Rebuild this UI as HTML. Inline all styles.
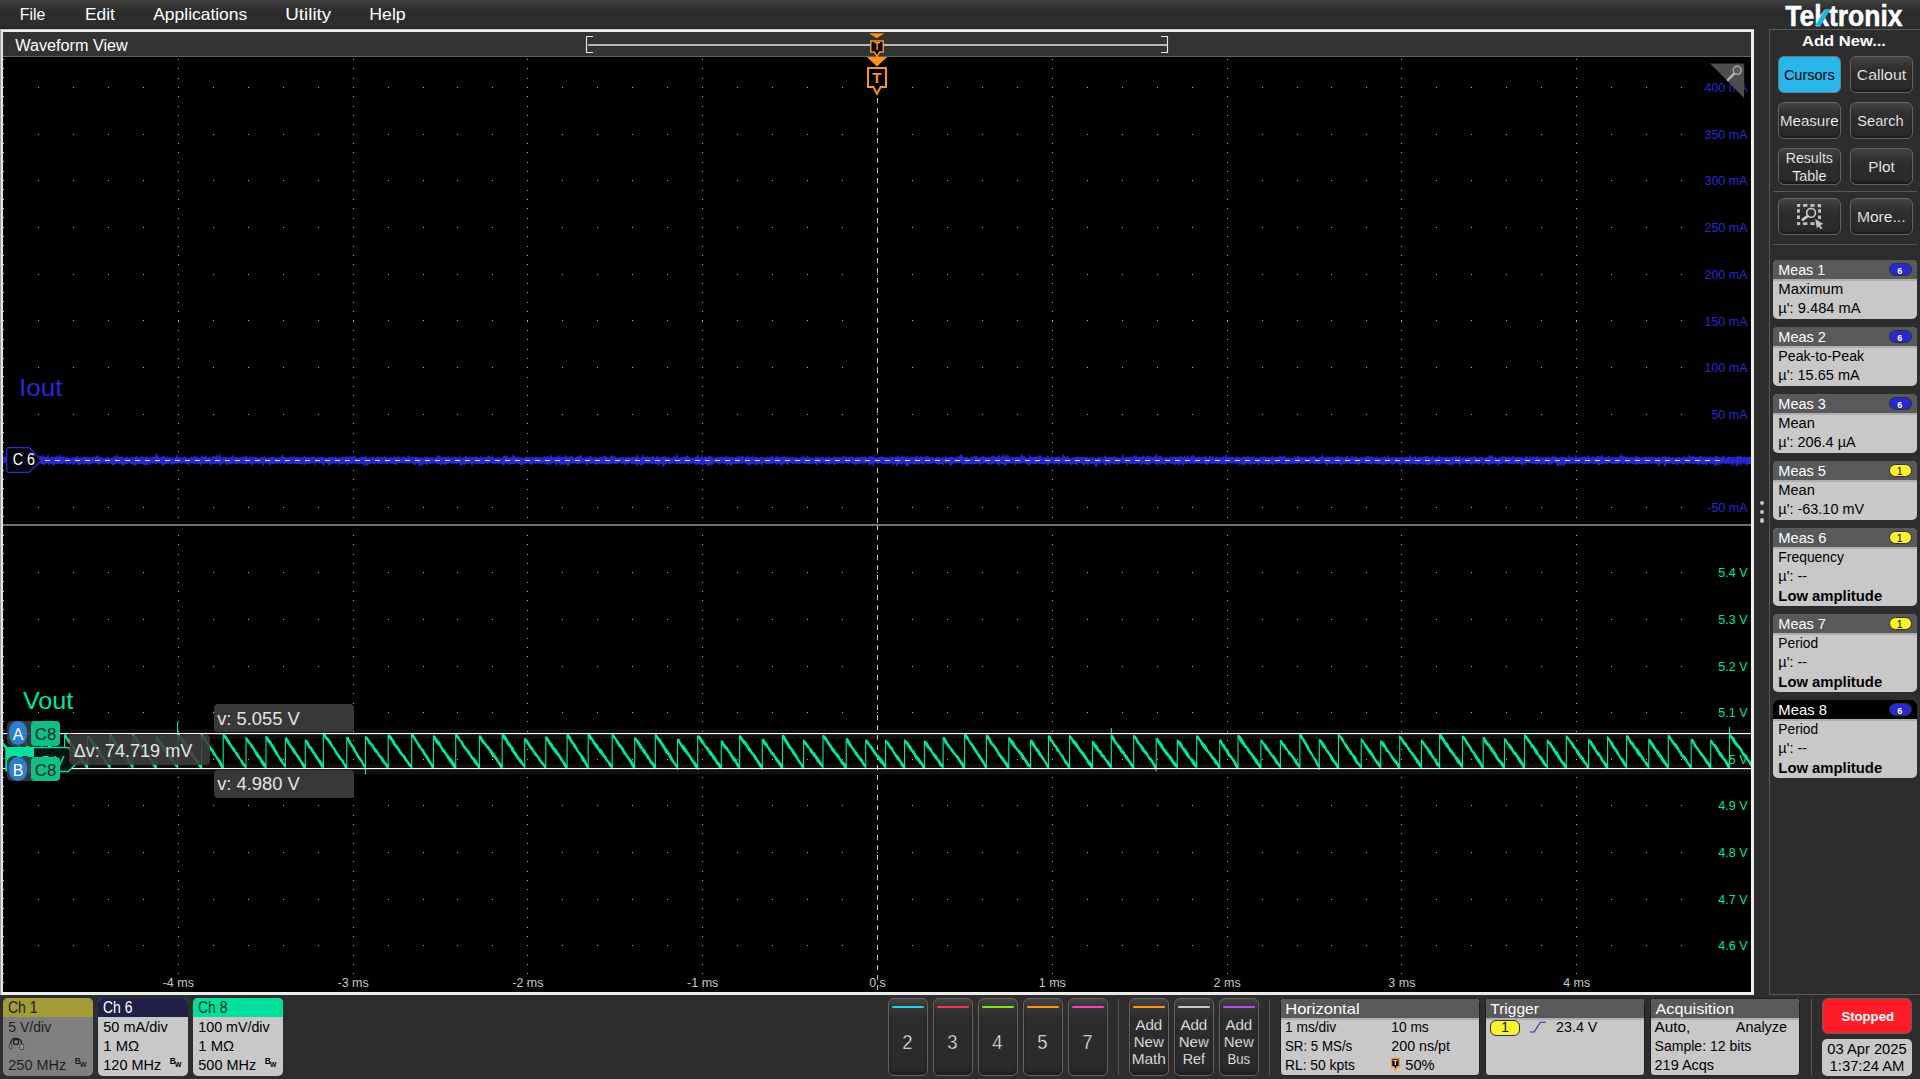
<!DOCTYPE html>
<html><head><meta charset="utf-8"><title>Waveform View</title>
<style>
html,body{margin:0;padding:0}
body{width:1920px;height:1079px;overflow:hidden;background:#2d2d2d;font-family:"Liberation Sans", sans-serif;position:relative}
div,svg{position:absolute;box-sizing:border-box}
text{font-family:"Liberation Sans", sans-serif;white-space:pre}
</style></head>
<body>
<div style="left:0px;top:0px;width:1920px;height:29px;background:linear-gradient(#424242 0,#3a3a3a 3px,#2d2d2d 11px)"></div>
<div style="left:0px;top:27px;width:1755px;height:2px;background:linear-gradient(#2a2a2a,#1b1b1b)"></div>
<svg width="1920" height="1079" style="left:0;top:0"><text x="19.76" y="20" font-size="16.5" fill="#fff" textLength="25.48" lengthAdjust="spacingAndGlyphs">File</text><text x="84.96" y="20" font-size="16.5" fill="#fff" textLength="29.88" lengthAdjust="spacingAndGlyphs">Edit</text><text x="153.26" y="20" font-size="16.5" fill="#fff" textLength="93.98" lengthAdjust="spacingAndGlyphs">Applications</text><text x="285.26" y="20" font-size="16.5" fill="#fff" textLength="45.98" lengthAdjust="spacingAndGlyphs">Utility</text><text x="369.26" y="20" font-size="16.5" fill="#fff" textLength="36.48" lengthAdjust="spacingAndGlyphs">Help</text></svg>
<div style="left:0px;top:29px;width:1754px;height:966px;background:#000;border:3px solid #ececec;border-left-color:#e4e4e4"></div>
<div style="left:0px;top:29px;width:1px;height:966px;background:#a4a4a4"></div>
<div style="left:0px;top:29px;width:1754px;height:1px;background:#cfcfcf"></div>
<div style="left:3px;top:32px;width:1748px;height:24px;background:#333332"></div>
<div style="left:3px;top:56px;width:1748px;height:1px;background:#5f6163"></div>
<svg width="1920" height="1079" style="left:0;top:0"><text x="15.28" y="51" font-size="16" fill="#fff" textLength="112.44" lengthAdjust="spacingAndGlyphs">Waveform View</text></svg>
<svg width="600" height="26" style="left:580px;top:32px" viewBox="580 32 600 26"><path d="M593 36.5H586.5V52.5H593M1161 36.5H1167.5V52.5H1161" fill="none" stroke="#e6e6e6" stroke-width="1.15"/><rect x="588" y="44" width="579" height="2" fill="#b6b6b6"/><path d="M869 33.2H884.4L876.7 38.2Z" fill="#f7931e"/><path d="M870.8 41H883.2V52H879.6L877 56.4L874.4 52H870.8Z" fill="#000" stroke="#f7931e" stroke-width="1.5"/></svg>
<svg width="1920" height="1079" style="left:0;top:0"><text x="877" y="50" font-size="10" fill="#f7931e" font-weight="700" text-anchor="middle">T</text></svg>
<svg width="1748" height="935" style="left:3px;top:57px" viewBox="3 57 1748 935"><g stroke="#b4b4b4" stroke-width="1" fill="none" shape-rendering="crispEdges"><path d="M178.5 58.98V524" stroke-dasharray="1 8.34"/><path d="M178.5 534.88V992" stroke-dasharray="1 8.33"/><path d="M353.5 58.98V524" stroke-dasharray="1 8.34"/><path d="M353.5 534.88V992" stroke-dasharray="1 8.33"/><path d="M527.5 58.98V524" stroke-dasharray="1 8.34"/><path d="M527.5 534.88V992" stroke-dasharray="1 8.33"/><path d="M702.5 58.98V524" stroke-dasharray="1 8.34"/><path d="M702.5 534.88V992" stroke-dasharray="1 8.33"/><path d="M1052.5 58.98V524" stroke-dasharray="1 8.34"/><path d="M1052.5 534.88V992" stroke-dasharray="1 8.33"/><path d="M1227.5 58.98V524" stroke-dasharray="1 8.34"/><path d="M1227.5 534.88V992" stroke-dasharray="1 8.33"/><path d="M1401.5 58.98V524" stroke-dasharray="1 8.34"/><path d="M1401.5 534.88V992" stroke-dasharray="1 8.33"/><path d="M1576.5 58.98V524" stroke-dasharray="1 8.34"/><path d="M1576.5 534.88V992" stroke-dasharray="1 8.33"/><path d="M37.96 87.5H1695" stroke-dasharray="1 33.960"/><path d="M37.96 134.5H1695" stroke-dasharray="1 33.960"/><path d="M37.96 180.5H1695" stroke-dasharray="1 33.960"/><path d="M37.96 227.5H1695" stroke-dasharray="1 33.960"/><path d="M37.96 274.5H1695" stroke-dasharray="1 33.960"/><path d="M37.96 320.5H1695" stroke-dasharray="1 33.960"/><path d="M37.96 367.5H1695" stroke-dasharray="1 33.960"/><path d="M37.96 414.5H1695" stroke-dasharray="1 33.960"/><path d="M37.96 461.5H1695" stroke-dasharray="1 33.960"/><path d="M37.96 507.5H1695" stroke-dasharray="1 33.960"/><path d="M37.96 572.5H1695" stroke-dasharray="1 33.960"/><path d="M37.96 619.5H1695" stroke-dasharray="1 33.960"/><path d="M37.96 666.5H1695" stroke-dasharray="1 33.960"/><path d="M37.96 712.5H1695" stroke-dasharray="1 33.960"/><path d="M37.96 759.5H1695" stroke-dasharray="1 33.960"/><path d="M37.96 805.5H1695" stroke-dasharray="1 33.960"/><path d="M37.96 852.5H1695" stroke-dasharray="1 33.960"/><path d="M37.96 899.5H1695" stroke-dasharray="1 33.960"/><path d="M37.96 945.5H1695" stroke-dasharray="1 33.960"/><path d="M3 58.63V524" stroke-dasharray="1 8.34" stroke-width="2.4"/><path d="M3 534.53V992" stroke-dasharray="1 8.33" stroke-width="2.4"/></g><path d="M877.5 98V524M877.5 525V992" stroke="#c6c6c6" stroke-width="1" stroke-dasharray="5 5" fill="none" shape-rendering="crispEdges"/><rect x="3" y="524" width="1748" height="2" fill="#727272"/><path d="M3 457.0L4 456.5L5 456.6L6 456.3L7 456.0L8 457.7L9 456.5L10 456.5L11 453.9L12 456.9L13 457.6L14 454.5L15 455.2L16 456.5L17 457.9L18 456.5L19 457.5L20 455.7L21 458.0L22 457.1L23 456.5L24 456.9L25 457.4L26 456.4L27 456.9L28 457.5L29 457.5L30 457.5L31 456.8L32 456.8L33 457.1L34 457.3L35 457.0L36 456.6L37 457.2L38 456.9L39 457.0L40 455.6L41 455.5L42 457.3L43 453.1L44 457.4L45 456.4L46 456.5L47 457.5L48 452.5L49 457.9L50 457.5L51 457.5L52 456.4L53 457.3L54 457.6L55 456.5L56 456.4L57 454.8L58 457.5L59 456.1L60 454.3L61 456.9L62 456.5L63 456.7L64 456.6L65 457.5L66 457.7L67 456.9L68 456.7L69 457.9L70 457.5L71 458.0L72 457.4L73 457.5L74 456.6L75 457.7L76 456.8L77 455.2L78 457.3L79 457.8L80 456.4L81 457.7L82 457.9L83 456.7L84 456.8L85 456.8L86 456.9L87 456.6L88 457.6L89 456.5L90 457.9L91 457.1L92 457.5L93 456.9L94 457.0L95 457.4L96 454.8L97 456.8L98 454.7L99 457.2L100 457.0L101 457.1L102 457.6L103 457.6L104 457.9L105 457.7L106 457.5L107 457.2L108 457.3L109 456.9L110 458.0L111 458.0L112 457.5L113 457.4L114 456.9L115 455.6L116 457.4L117 454.0L118 456.4L119 457.4L120 456.8L121 456.7L122 456.2L123 457.8L124 457.0L125 457.8L126 457.3L127 456.5L128 457.5L129 458.0L130 456.9L131 458.0L132 456.9L133 457.2L134 457.4L135 456.6L136 456.9L137 455.1L138 458.0L139 457.4L140 457.6L141 456.6L142 455.5L143 457.6L144 456.9L145 457.9L146 456.7L147 456.7L148 457.3L149 457.5L150 457.3L151 457.6L152 456.5L153 456.8L154 457.2L155 456.5L156 452.4L157 456.0L158 454.3L159 458.0L160 458.0L161 456.6L162 457.4L163 456.4L164 455.2L165 457.1L166 457.5L167 455.8L168 458.0L169 455.9L170 457.9L171 457.3L172 457.7L173 458.1L174 456.8L175 458.1L176 457.5L177 453.6L178 457.2L179 456.7L180 457.5L181 456.5L182 457.7L183 457.7L184 455.6L185 458.0L186 457.1L187 457.5L188 458.0L189 458.0L190 457.6L191 456.5L192 456.7L193 457.8L194 456.3L195 456.6L196 455.9L197 457.7L198 454.9L199 458.0L200 457.7L201 456.5L202 455.3L203 455.6L204 457.3L205 456.4L206 454.9L207 457.0L208 457.9L209 456.5L210 457.7L211 457.8L212 457.8L213 456.1L214 455.7L215 457.0L216 456.3L217 453.9L218 456.5L219 456.7L220 452.9L221 456.8L222 457.9L223 456.7L224 457.6L225 457.2L226 457.1L227 457.5L228 457.3L229 458.1L230 457.1L231 456.4L232 457.5L233 454.0L234 457.7L235 457.3L236 456.8L237 457.0L238 457.8L239 457.8L240 456.2L241 457.9L242 457.1L243 456.8L244 455.8L245 457.7L246 454.8L247 456.6L248 457.2L249 458.0L250 455.6L251 457.9L252 456.5L253 457.9L254 456.6L255 456.7L256 457.1L257 457.4L258 457.5L259 458.0L260 458.0L261 457.3L262 456.6L263 457.3L264 456.8L265 456.4L266 457.6L267 457.7L268 457.6L269 457.3L270 457.6L271 457.3L272 456.8L273 456.4L274 456.8L275 457.3L276 458.1L277 456.9L278 457.6L279 458.0L280 456.7L281 457.6L282 453.8L283 455.6L284 456.9L285 456.9L286 458.0L287 456.8L288 457.6L289 457.6L290 457.0L291 456.4L292 458.0L293 457.7L294 455.3L295 457.2L296 457.2L297 457.1L298 456.9L299 458.0L300 456.9L301 457.1L302 458.0L303 456.6L304 456.5L305 456.5L306 457.0L307 457.3L308 456.5L309 457.6L310 457.1L311 457.0L312 456.5L313 457.3L314 456.8L315 456.6L316 458.1L317 456.7L318 456.6L319 458.0L320 456.5L321 457.4L322 457.2L323 456.6L324 457.7L325 458.0L326 456.9L327 458.0L328 457.7L329 456.6L330 457.3L331 456.5L332 457.6L333 456.8L334 457.6L335 456.5L336 456.8L337 457.7L338 457.5L339 457.8L340 457.0L341 457.2L342 457.4L343 455.5L344 457.5L345 457.4L346 456.4L347 456.6L348 457.0L349 456.4L350 455.9L351 457.0L352 457.3L353 456.5L354 454.9L355 456.7L356 456.8L357 458.1L358 457.7L359 457.7L360 457.3L361 456.4L362 457.0L363 456.8L364 457.2L365 456.5L366 455.5L367 457.8L368 457.7L369 456.9L370 457.7L371 457.8L372 457.3L373 457.1L374 456.8L375 458.1L376 457.5L377 457.6L378 455.8L379 457.3L380 457.7L381 456.5L382 457.5L383 457.4L384 456.9L385 456.3L386 457.6L387 456.5L388 457.7L389 457.4L390 457.1L391 456.9L392 457.3L393 457.6L394 456.2L395 456.4L396 457.8L397 456.6L398 457.5L399 455.3L400 457.7L401 457.1L402 457.4L403 457.1L404 455.9L405 457.5L406 457.3L407 457.2L408 456.5L409 454.5L410 457.5L411 456.9L412 457.0L413 458.0L414 456.9L415 457.0L416 456.6L417 457.3L418 457.4L419 457.3L420 457.5L421 457.3L422 457.7L423 457.7L424 457.5L425 456.5L426 457.5L427 455.7L428 457.4L429 456.9L430 457.9L431 457.0L432 457.4L433 457.5L434 457.6L435 457.9L436 457.0L437 455.9L438 454.4L439 456.7L440 454.5L441 457.7L442 456.7L443 457.7L444 456.8L445 457.5L446 457.0L447 457.3L448 456.9L449 456.5L450 458.1L451 457.1L452 456.3L453 458.0L454 456.6L455 456.5L456 456.9L457 458.0L458 456.9L459 457.6L460 454.6L461 457.9L462 457.6L463 457.6L464 457.0L465 457.3L466 454.7L467 456.4L468 457.5L469 457.1L470 456.1L471 457.9L472 456.3L473 457.6L474 456.9L475 457.2L476 456.1L477 456.7L478 457.0L479 457.8L480 457.2L481 455.1L482 457.7L483 457.5L484 457.4L485 456.7L486 457.4L487 457.7L488 455.5L489 455.6L490 456.7L491 458.1L492 453.7L493 457.6L494 457.5L495 458.0L496 457.8L497 457.6L498 457.5L499 457.6L500 457.4L501 458.0L502 457.8L503 456.8L504 454.5L505 456.6L506 455.6L507 456.0L508 456.9L509 457.9L510 456.8L511 458.0L512 457.0L513 453.6L514 456.7L515 455.5L516 457.9L517 456.7L518 456.6L519 457.1L520 458.0L521 457.1L522 457.7L523 457.6L524 457.9L525 457.6L526 455.4L527 457.4L528 457.1L529 457.3L530 457.3L531 457.7L532 456.5L533 457.6L534 458.0L535 456.6L536 456.7L537 457.2L538 457.2L539 457.1L540 457.0L541 457.6L542 456.7L543 458.1L544 455.7L545 457.3L546 456.5L547 457.1L548 454.9L549 457.3L550 456.5L551 454.0L552 456.6L553 457.7L554 456.8L555 457.1L556 457.2L557 454.7L558 457.3L559 456.4L560 454.5L561 457.8L562 456.9L563 457.1L564 457.6L565 456.6L566 454.4L567 456.7L568 457.8L569 456.5L570 456.8L571 456.5L572 455.2L573 456.7L574 457.7L575 457.8L576 457.1L577 456.1L578 457.0L579 455.7L580 456.0L581 454.6L582 456.7L583 457.9L584 457.8L585 457.8L586 457.4L587 456.5L588 457.1L589 456.5L590 455.7L591 456.4L592 456.4L593 457.9L594 457.1L595 456.6L596 457.5L597 457.5L598 457.7L599 457.8L600 455.8L601 457.2L602 457.7L603 455.1L604 457.3L605 455.0L606 456.4L607 456.8L608 457.8L609 457.6L610 458.1L611 455.0L612 456.5L613 455.0L614 457.1L615 455.9L616 457.5L617 457.2L618 457.9L619 458.0L620 456.7L621 457.2L622 457.7L623 457.0L624 457.6L625 457.5L626 456.3L627 457.7L628 455.9L629 457.8L630 457.4L631 457.6L632 456.8L633 456.9L634 456.5L635 457.0L636 457.0L637 453.5L638 456.8L639 457.8L640 457.4L641 457.9L642 454.6L643 454.6L644 457.4L645 456.0L646 458.1L647 456.4L648 456.2L649 457.1L650 456.9L651 457.5L652 456.8L653 455.1L654 457.1L655 457.7L656 457.6L657 455.4L658 456.2L659 458.1L660 457.1L661 457.2L662 457.4L663 455.9L664 456.7L665 455.7L666 457.4L667 457.3L668 456.9L669 456.9L670 457.7L671 457.8L672 458.0L673 457.8L674 455.0L675 457.3L676 457.7L677 451.7L678 456.9L679 458.0L680 457.2L681 456.9L682 457.2L683 457.7L684 456.2L685 456.9L686 456.5L687 455.6L688 455.2L689 457.7L690 457.0L691 457.9L692 457.8L693 458.1L694 457.5L695 457.0L696 456.5L697 456.7L698 453.5L699 456.7L700 457.7L701 456.9L702 454.2L703 457.9L704 457.0L705 456.5L706 456.5L707 457.2L708 456.5L709 456.5L710 454.9L711 457.4L712 455.4L713 458.1L714 457.4L715 457.3L716 457.7L717 457.2L718 457.0L719 457.3L720 456.7L721 456.9L722 456.8L723 457.1L724 457.5L725 457.2L726 454.7L727 456.5L728 456.8L729 457.0L730 457.1L731 457.6L732 456.3L733 458.0L734 457.8L735 457.1L736 457.3L737 456.0L738 457.4L739 455.1L740 457.6L741 456.0L742 456.8L743 455.2L744 457.2L745 457.5L746 457.2L747 454.2L748 456.9L749 456.2L750 457.6L751 456.9L752 457.7L753 454.2L754 458.0L755 456.8L756 457.1L757 457.2L758 457.3L759 457.8L760 456.8L761 456.6L762 457.2L763 456.5L764 457.6L765 457.8L766 457.8L767 455.7L768 457.7L769 456.6L770 457.7L771 456.7L772 454.7L773 456.5L774 457.7L775 457.8L776 454.2L777 456.5L778 457.3L779 456.5L780 457.3L781 456.5L782 457.0L783 456.8L784 456.5L785 456.9L786 457.5L787 457.0L788 456.2L789 457.4L790 456.2L791 457.9L792 456.8L793 457.1L794 457.8L795 457.5L796 456.9L797 457.8L798 457.7L799 457.6L800 457.7L801 456.4L802 458.0L803 454.6L804 457.1L805 457.7L806 457.6L807 454.5L808 457.7L809 456.9L810 457.6L811 457.5L812 458.1L813 457.2L814 458.0L815 456.9L816 457.0L817 456.2L818 457.3L819 457.3L820 457.6L821 457.5L822 456.6L823 457.0L824 457.6L825 457.9L826 457.1L827 457.5L828 457.2L829 456.7L830 456.4L831 457.8L832 457.8L833 457.3L834 456.9L835 456.6L836 457.4L837 457.3L838 457.5L839 456.9L840 456.5L841 457.0L842 458.1L843 454.8L844 456.8L845 456.9L846 455.4L847 457.8L848 456.9L849 456.9L850 457.0L851 456.6L852 457.0L853 457.0L854 457.9L855 457.0L856 457.8L857 456.6L858 457.0L859 457.8L860 456.4L861 457.0L862 456.4L863 456.9L864 457.5L865 455.8L866 456.9L867 457.2L868 457.9L869 455.3L870 456.5L871 456.7L872 455.7L873 458.0L874 453.7L875 457.7L876 457.9L877 457.6L878 457.3L879 457.6L880 456.7L881 456.4L882 456.7L883 457.1L884 457.1L885 457.0L886 457.6L887 456.7L888 457.5L889 457.7L890 456.7L891 456.4L892 457.2L893 457.5L894 457.0L895 457.0L896 456.6L897 456.8L898 454.5L899 457.0L900 457.8L901 455.3L902 457.3L903 455.3L904 457.6L905 457.3L906 457.6L907 456.8L908 455.6L909 457.9L910 457.1L911 456.7L912 457.8L913 456.6L914 457.0L915 456.4L916 457.0L917 454.4L918 457.4L919 457.7L920 456.5L921 456.6L922 456.6L923 457.6L924 457.1L925 456.6L926 456.6L927 456.1L928 456.8L929 456.4L930 457.7L931 457.2L932 457.0L933 456.8L934 458.0L935 457.8L936 457.1L937 457.2L938 457.1L939 457.1L940 457.5L941 458.1L942 457.2L943 456.4L944 457.9L945 456.9L946 454.8L947 457.5L948 457.8L949 456.7L950 456.5L951 456.7L952 457.1L953 456.6L954 457.8L955 458.1L956 457.2L957 455.7L958 458.0L959 455.7L960 454.9L961 454.8L962 453.8L963 457.4L964 456.6L965 458.0L966 456.8L967 456.6L968 457.4L969 458.1L970 458.0L971 456.6L972 457.0L973 457.9L974 455.6L975 456.5L976 456.7L977 455.1L978 457.5L979 458.1L980 456.2L981 456.7L982 457.2L983 455.4L984 456.5L985 457.3L986 456.7L987 457.3L988 456.7L989 456.5L990 457.4L991 457.0L992 456.6L993 455.3L994 456.5L995 456.9L996 456.7L997 457.3L998 456.8L999 454.2L1000 455.8L1001 457.8L1002 456.5L1003 453.4L1004 456.6L1005 456.5L1006 454.7L1007 454.9L1008 457.1L1009 454.6L1010 457.6L1011 457.9L1012 455.7L1013 457.4L1014 456.9L1015 457.1L1016 457.0L1017 456.5L1018 457.4L1019 457.3L1020 457.2L1021 454.8L1022 453.8L1023 456.7L1024 454.9L1025 456.9L1026 457.4L1027 457.8L1028 457.9L1029 457.1L1030 453.9L1031 457.3L1032 456.4L1033 457.4L1034 456.7L1035 457.1L1036 456.7L1037 456.4L1038 456.5L1039 456.6L1040 454.0L1041 455.9L1042 457.5L1043 457.8L1044 456.7L1045 457.8L1046 457.8L1047 456.6L1048 454.7L1049 457.8L1050 457.8L1051 457.0L1052 456.5L1053 457.7L1054 457.0L1055 457.5L1056 456.8L1057 456.8L1058 456.5L1059 456.6L1060 456.9L1061 458.0L1062 457.4L1063 454.5L1064 454.5L1065 456.8L1066 458.0L1067 456.5L1068 455.7L1069 458.0L1070 458.0L1071 458.0L1072 457.4L1073 457.3L1074 457.7L1075 457.0L1076 457.0L1077 456.5L1078 456.1L1079 457.5L1080 456.4L1081 457.8L1082 456.7L1083 457.4L1084 456.7L1085 457.3L1086 456.8L1087 457.0L1088 457.3L1089 457.9L1090 456.7L1091 458.0L1092 456.9L1093 458.0L1094 456.8L1095 457.7L1096 458.1L1097 458.1L1098 456.7L1099 456.6L1100 457.6L1101 456.6L1102 457.8L1103 458.0L1104 457.7L1105 454.4L1106 456.8L1107 456.9L1108 457.3L1109 456.8L1110 456.5L1111 457.6L1112 456.6L1113 457.4L1114 454.6L1115 457.8L1116 456.5L1117 457.7L1118 456.9L1119 457.8L1120 457.5L1121 458.1L1122 457.0L1123 452.7L1124 458.0L1125 457.7L1126 456.8L1127 457.2L1128 457.0L1129 457.2L1130 457.7L1131 455.9L1132 457.7L1133 457.7L1134 454.8L1135 456.7L1136 454.8L1137 456.7L1138 457.6L1139 456.6L1140 456.5L1141 457.0L1142 456.9L1143 454.4L1144 456.7L1145 458.1L1146 456.8L1147 456.7L1148 454.7L1149 456.5L1150 457.0L1151 455.4L1152 458.0L1153 457.1L1154 457.0L1155 456.5L1156 453.8L1157 454.3L1158 457.9L1159 455.7L1160 456.5L1161 455.2L1162 456.5L1163 457.8L1164 457.4L1165 457.6L1166 457.5L1167 457.4L1168 457.1L1169 457.9L1170 456.2L1171 457.1L1172 457.7L1173 456.6L1174 457.0L1175 457.1L1176 456.8L1177 457.2L1178 456.6L1179 456.2L1180 457.7L1181 455.0L1182 456.6L1183 457.8L1184 456.8L1185 455.7L1186 457.9L1187 456.5L1188 454.6L1189 457.8L1190 457.5L1191 454.9L1192 457.1L1193 454.9L1194 454.9L1195 457.7L1196 457.5L1197 456.9L1198 457.4L1199 454.8L1200 457.8L1201 457.1L1202 458.0L1203 456.5L1204 456.8L1205 456.5L1206 455.5L1207 457.1L1208 457.9L1209 457.0L1210 454.8L1211 457.2L1212 456.5L1213 455.5L1214 457.8L1215 458.0L1216 456.3L1217 456.7L1218 457.9L1219 457.1L1220 457.0L1221 457.7L1222 456.3L1223 456.9L1224 455.4L1225 458.1L1226 454.3L1227 455.9L1228 457.5L1229 455.6L1230 457.4L1231 456.8L1232 456.5L1233 456.8L1234 458.0L1235 457.2L1236 456.8L1237 456.4L1238 457.1L1239 457.0L1240 456.9L1241 458.0L1242 457.5L1243 456.5L1244 456.7L1245 457.3L1246 457.1L1247 457.0L1248 456.0L1249 457.1L1250 456.8L1251 457.1L1252 456.8L1253 457.5L1254 455.4L1255 458.0L1256 457.9L1257 456.6L1258 458.0L1259 457.8L1260 456.4L1261 457.0L1262 457.4L1263 456.5L1264 456.4L1265 456.5L1266 457.7L1267 456.7L1268 457.8L1269 456.8L1270 457.5L1271 457.4L1272 455.2L1273 457.5L1274 457.1L1275 456.5L1276 457.2L1277 457.4L1278 456.8L1279 457.1L1280 454.3L1281 456.5L1282 456.7L1283 455.8L1284 456.9L1285 455.0L1286 458.1L1287 457.5L1288 457.2L1289 457.6L1290 458.1L1291 457.9L1292 458.0L1293 457.7L1294 458.1L1295 454.5L1296 457.5L1297 456.4L1298 454.7L1299 456.4L1300 457.1L1301 457.3L1302 457.4L1303 457.6L1304 457.3L1305 456.6L1306 457.7L1307 456.6L1308 458.1L1309 457.9L1310 455.9L1311 456.8L1312 456.7L1313 456.7L1314 455.0L1315 457.2L1316 457.6L1317 457.3L1318 457.7L1319 456.7L1320 457.2L1321 457.3L1322 452.7L1323 457.6L1324 455.9L1325 457.9L1326 456.9L1327 456.6L1328 456.4L1329 457.1L1330 457.0L1331 457.2L1332 456.9L1333 456.5L1334 457.4L1335 457.9L1336 455.7L1337 457.3L1338 455.3L1339 457.0L1340 457.2L1341 456.5L1342 456.3L1343 458.0L1344 456.6L1345 457.2L1346 456.8L1347 455.3L1348 456.6L1349 458.0L1350 457.5L1351 456.9L1352 455.4L1353 457.1L1354 457.8L1355 457.3L1356 456.6L1357 456.5L1358 457.6L1359 458.1L1360 456.7L1361 457.5L1362 456.8L1363 457.4L1364 457.6L1365 456.1L1366 456.7L1367 456.5L1368 455.3L1369 456.6L1370 457.5L1371 455.3L1372 457.5L1373 457.0L1374 457.5L1375 456.7L1376 458.0L1377 454.7L1378 457.9L1379 457.9L1380 457.0L1381 456.7L1382 458.0L1383 457.3L1384 457.1L1385 456.3L1386 458.0L1387 456.9L1388 454.4L1389 456.7L1390 457.7L1391 457.1L1392 457.6L1393 456.9L1394 457.0L1395 456.5L1396 457.4L1397 457.7L1398 456.8L1399 457.5L1400 456.5L1401 457.9L1402 456.7L1403 457.3L1404 457.8L1405 457.6L1406 456.6L1407 456.7L1408 457.7L1409 457.0L1410 454.0L1411 456.8L1412 457.5L1413 457.5L1414 456.7L1415 455.5L1416 457.3L1417 457.7L1418 457.1L1419 456.4L1420 457.6L1421 456.1L1422 457.9L1423 456.5L1424 456.9L1425 456.6L1426 455.8L1427 456.5L1428 456.6L1429 456.8L1430 456.8L1431 457.8L1432 457.0L1433 454.7L1434 457.8L1435 457.4L1436 458.0L1437 456.7L1438 457.4L1439 454.9L1440 457.0L1441 457.0L1442 457.5L1443 457.3L1444 457.7L1445 456.5L1446 457.2L1447 456.4L1448 458.0L1449 456.9L1450 457.6L1451 457.0L1452 456.6L1453 457.3L1454 455.2L1455 457.4L1456 456.1L1457 456.7L1458 457.5L1459 456.9L1460 455.2L1461 457.6L1462 457.9L1463 457.4L1464 457.2L1465 457.5L1466 457.7L1467 457.6L1468 456.5L1469 457.9L1470 456.9L1471 457.3L1472 456.7L1473 457.8L1474 456.2L1475 456.2L1476 457.6L1477 457.0L1478 458.1L1479 456.7L1480 456.5L1481 457.7L1482 457.0L1483 457.5L1484 457.4L1485 457.5L1486 457.6L1487 456.5L1488 457.7L1489 455.2L1490 455.4L1491 455.8L1492 454.3L1493 457.6L1494 457.3L1495 456.8L1496 457.8L1497 457.7L1498 458.1L1499 456.4L1500 457.9L1501 456.8L1502 456.2L1503 456.5L1504 456.8L1505 456.6L1506 456.6L1507 457.4L1508 456.0L1509 457.4L1510 456.5L1511 458.0L1512 457.2L1513 455.2L1514 456.1L1515 458.0L1516 456.9L1517 457.1L1518 457.1L1519 456.7L1520 457.5L1521 456.9L1522 456.5L1523 458.0L1524 458.0L1525 455.9L1526 456.7L1527 455.4L1528 457.7L1529 457.5L1530 455.2L1531 457.2L1532 457.5L1533 455.3L1534 457.6L1535 457.0L1536 457.2L1537 455.5L1538 456.7L1539 457.8L1540 457.8L1541 457.5L1542 456.4L1543 457.9L1544 456.4L1545 457.6L1546 456.5L1547 457.3L1548 456.5L1549 457.2L1550 457.6L1551 457.6L1552 456.9L1553 454.8L1554 457.0L1555 457.3L1556 455.2L1557 457.7L1558 457.0L1559 457.6L1560 457.1L1561 456.8L1562 456.5L1563 457.3L1564 456.6L1565 457.1L1566 457.9L1567 456.9L1568 457.9L1569 454.6L1570 456.9L1571 457.0L1572 457.4L1573 457.5L1574 457.8L1575 456.7L1576 454.1L1577 457.6L1578 457.9L1579 456.9L1580 456.8L1581 456.9L1582 456.5L1583 456.7L1584 456.7L1585 456.5L1586 457.7L1587 457.1L1588 455.1L1589 455.7L1590 457.8L1591 457.6L1592 456.8L1593 456.5L1594 457.0L1595 457.1L1596 457.6L1597 455.9L1598 455.7L1599 455.9L1600 457.5L1601 455.6L1602 453.9L1603 456.9L1604 457.8L1605 456.9L1606 457.0L1607 457.5L1608 456.5L1609 455.0L1610 456.8L1611 457.8L1612 456.8L1613 456.9L1614 457.5L1615 457.5L1616 456.7L1617 457.2L1618 457.4L1619 457.3L1620 455.1L1621 454.0L1622 457.3L1623 455.2L1624 456.4L1625 457.3L1626 456.9L1627 457.0L1628 456.6L1629 458.1L1630 457.1L1631 456.7L1632 457.2L1633 457.6L1634 456.1L1635 457.9L1636 454.9L1637 456.6L1638 457.3L1639 457.0L1640 457.1L1641 457.7L1642 456.9L1643 457.4L1644 457.1L1645 456.7L1646 456.6L1647 457.5L1648 456.7L1649 457.3L1650 456.9L1651 457.5L1652 456.4L1653 458.1L1654 457.2L1655 456.4L1656 457.5L1657 457.4L1658 456.8L1659 456.8L1660 457.4L1661 458.1L1662 456.7L1663 456.5L1664 457.6L1665 455.7L1666 456.6L1667 457.0L1668 457.2L1669 456.5L1670 456.6L1671 457.7L1672 457.6L1673 457.1L1674 457.5L1675 457.8L1676 456.7L1677 457.9L1678 457.0L1679 457.1L1680 457.6L1681 458.0L1682 457.0L1683 458.0L1684 455.2L1685 458.0L1686 457.0L1687 457.0L1688 458.1L1689 454.3L1690 456.1L1691 456.6L1692 456.0L1693 457.1L1694 455.5L1695 457.1L1696 456.7L1697 456.9L1698 457.3L1699 456.5L1700 455.7L1701 456.0L1702 456.6L1703 457.9L1704 455.3L1705 457.9L1706 457.6L1707 456.4L1708 456.7L1709 456.4L1710 456.5L1711 456.8L1712 457.2L1713 456.6L1714 458.1L1715 455.9L1716 455.2L1717 456.7L1718 456.5L1719 456.9L1720 457.6L1721 458.1L1722 456.5L1723 456.6L1724 455.2L1725 458.1L1726 458.0L1727 457.5L1728 456.7L1729 456.7L1730 456.8L1731 456.8L1732 457.8L1733 457.2L1734 456.8L1735 457.8L1736 457.0L1737 456.8L1738 454.8L1739 457.1L1740 456.6L1741 455.5L1742 457.1L1743 457.7L1744 456.6L1745 456.5L1746 457.4L1747 456.8L1748 457.8L1749 456.7L1750 456.5L1751 457.6L1751 463.8L1750 463.9L1749 464.0L1748 464.2L1747 464.1L1746 465.6L1745 463.3L1744 464.4L1743 463.6L1742 463.1L1741 466.0L1740 463.5L1739 463.7L1738 465.2L1737 466.9L1736 464.1L1735 463.2L1734 463.3L1733 463.5L1732 464.7L1731 463.4L1730 463.4L1729 463.5L1728 464.0L1727 463.6L1726 464.3L1725 463.3L1724 463.7L1723 463.1L1722 463.9L1721 463.6L1720 466.1L1719 463.1L1718 466.3L1717 464.6L1716 464.7L1715 466.8L1714 464.1L1713 464.5L1712 463.0L1711 465.1L1710 463.9L1709 463.2L1708 463.0L1707 464.5L1706 465.6L1705 463.7L1704 464.8L1703 464.0L1702 464.2L1701 463.8L1700 463.5L1699 466.1L1698 464.3L1697 463.5L1696 464.7L1695 463.0L1694 464.4L1693 464.3L1692 463.2L1691 463.7L1690 463.4L1689 464.0L1688 463.6L1687 463.8L1686 463.5L1685 463.1L1684 464.4L1683 465.1L1682 464.0L1681 463.7L1680 463.7L1679 463.4L1678 463.6L1677 466.7L1676 463.8L1675 464.6L1674 463.9L1673 464.4L1672 464.0L1671 463.3L1670 463.9L1669 462.9L1668 464.9L1667 462.9L1666 464.4L1665 467.3L1664 465.6L1663 463.1L1662 463.9L1661 463.3L1660 464.5L1659 467.0L1658 464.0L1657 464.5L1656 463.6L1655 464.6L1654 463.3L1653 463.2L1652 464.0L1651 463.5L1650 464.0L1649 463.3L1648 463.6L1647 464.1L1646 463.9L1645 464.2L1644 464.0L1643 464.5L1642 463.8L1641 464.3L1640 464.2L1639 464.2L1638 463.8L1637 465.0L1636 464.6L1635 463.7L1634 464.2L1633 463.9L1632 463.8L1631 462.9L1630 463.6L1629 464.0L1628 463.5L1627 464.2L1626 463.6L1625 463.1L1624 464.2L1623 464.3L1622 464.3L1621 463.2L1620 463.0L1619 464.1L1618 463.4L1617 463.9L1616 464.2L1615 463.8L1614 463.5L1613 464.5L1612 464.1L1611 463.1L1610 463.8L1609 463.0L1608 463.0L1607 464.5L1606 464.2L1605 463.1L1604 464.5L1603 464.2L1602 464.0L1601 464.2L1600 464.4L1599 465.6L1598 464.6L1597 464.4L1596 463.2L1595 463.5L1594 464.2L1593 464.0L1592 463.1L1591 463.3L1590 464.1L1589 463.5L1588 464.0L1587 463.8L1586 463.3L1585 464.4L1584 464.0L1583 464.5L1582 463.1L1581 463.2L1580 463.4L1579 463.8L1578 464.4L1577 463.2L1576 463.2L1575 464.5L1574 462.9L1573 464.1L1572 463.2L1571 465.3L1570 463.0L1569 464.3L1568 463.0L1567 464.0L1566 463.9L1565 464.4L1564 465.5L1563 465.9L1562 463.0L1561 466.8L1560 464.5L1559 465.3L1558 466.5L1557 466.0L1556 463.2L1555 463.1L1554 463.6L1553 463.6L1552 463.8L1551 465.0L1550 463.9L1549 465.1L1548 464.6L1547 463.2L1546 463.6L1545 464.4L1544 464.5L1543 463.5L1542 463.7L1541 465.8L1540 463.5L1539 463.6L1538 464.6L1537 464.2L1536 464.2L1535 464.3L1534 464.3L1533 463.3L1532 464.2L1531 463.3L1530 463.3L1529 463.2L1528 463.3L1527 463.1L1526 463.5L1525 466.3L1524 462.9L1523 464.3L1522 466.4L1521 464.4L1520 463.5L1519 463.6L1518 464.2L1517 463.4L1516 463.4L1515 465.3L1514 463.8L1513 464.3L1512 463.7L1511 464.0L1510 464.3L1509 464.0L1508 464.3L1507 463.3L1506 463.3L1505 463.8L1504 463.1L1503 463.6L1502 464.0L1501 463.8L1500 464.3L1499 464.3L1498 466.4L1497 464.0L1496 463.4L1495 463.9L1494 463.5L1493 463.4L1492 464.3L1491 463.4L1490 464.4L1489 465.1L1488 464.2L1487 463.8L1486 464.4L1485 463.1L1484 463.8L1483 466.9L1482 463.2L1481 463.0L1480 464.3L1479 463.6L1478 464.4L1477 463.5L1476 463.1L1475 464.3L1474 463.7L1473 463.3L1472 465.9L1471 464.2L1470 464.3L1469 463.3L1468 464.0L1467 463.9L1466 464.1L1465 462.9L1464 463.6L1463 464.2L1462 464.1L1461 462.9L1460 467.0L1459 464.8L1458 463.9L1457 463.3L1456 464.2L1455 463.6L1454 463.4L1453 467.1L1452 463.8L1451 464.9L1450 466.2L1449 463.6L1448 466.1L1447 463.5L1446 463.9L1445 464.5L1444 463.8L1443 463.3L1442 463.7L1441 463.4L1440 465.9L1439 464.3L1438 463.4L1437 465.7L1436 464.2L1435 464.4L1434 463.1L1433 464.0L1432 465.3L1431 463.5L1430 465.1L1429 464.9L1428 464.3L1427 466.2L1426 463.8L1425 463.2L1424 465.2L1423 464.5L1422 464.0L1421 464.1L1420 463.8L1419 464.2L1418 464.4L1417 464.5L1416 464.3L1415 464.2L1414 463.9L1413 463.6L1412 464.1L1411 463.8L1410 466.0L1409 463.3L1408 463.3L1407 464.0L1406 465.3L1405 463.3L1404 463.7L1403 462.9L1402 464.0L1401 463.6L1400 466.8L1399 464.1L1398 463.2L1397 463.5L1396 463.4L1395 463.7L1394 464.0L1393 464.4L1392 464.7L1391 464.0L1390 462.9L1389 463.8L1388 463.9L1387 464.5L1386 463.2L1385 464.6L1384 465.0L1383 464.4L1382 464.4L1381 463.3L1380 464.5L1379 464.2L1378 463.7L1377 464.4L1376 464.0L1375 463.9L1374 463.2L1373 462.9L1372 465.9L1371 463.4L1370 464.3L1369 463.9L1368 464.3L1367 463.4L1366 463.4L1365 463.8L1364 463.2L1363 463.2L1362 463.0L1361 463.3L1360 464.5L1359 463.9L1358 465.7L1357 463.8L1356 463.6L1355 464.0L1354 464.3L1353 463.8L1352 463.4L1351 464.4L1350 464.0L1349 464.1L1348 463.0L1347 463.4L1346 464.1L1345 463.3L1344 464.2L1343 463.5L1342 464.3L1341 466.2L1340 463.8L1339 464.2L1338 463.0L1337 464.4L1336 463.7L1335 463.7L1334 463.5L1333 464.2L1332 464.5L1331 464.3L1330 463.5L1329 463.7L1328 463.4L1327 466.8L1326 464.1L1325 464.0L1324 463.7L1323 463.0L1322 463.2L1321 464.1L1320 464.3L1319 463.9L1318 464.1L1317 462.9L1316 464.1L1315 464.4L1314 464.2L1313 463.1L1312 463.2L1311 463.0L1310 464.6L1309 463.4L1308 463.6L1307 463.0L1306 462.9L1305 463.3L1304 464.3L1303 463.7L1302 463.4L1301 464.5L1300 463.0L1299 463.1L1298 464.6L1297 463.4L1296 463.7L1295 463.3L1294 464.3L1293 463.7L1292 463.8L1291 463.7L1290 463.9L1289 463.2L1288 464.5L1287 464.2L1286 464.0L1285 464.4L1284 463.7L1283 464.3L1282 464.2L1281 464.0L1280 463.0L1279 463.5L1278 464.0L1277 464.0L1276 463.3L1275 464.0L1274 463.3L1273 465.7L1272 464.4L1271 463.5L1270 463.8L1269 463.8L1268 464.4L1267 465.1L1266 463.3L1265 464.0L1264 464.5L1263 464.5L1262 463.5L1261 463.4L1260 463.2L1259 465.0L1258 465.7L1257 463.3L1256 463.5L1255 463.9L1254 464.2L1253 463.3L1252 465.1L1251 463.7L1250 466.2L1249 463.5L1248 463.9L1247 463.1L1246 464.5L1245 464.2L1244 464.4L1243 465.6L1242 464.5L1241 463.1L1240 466.7L1239 463.0L1238 464.7L1237 464.3L1236 463.3L1235 463.4L1234 463.7L1233 463.6L1232 463.2L1231 463.8L1230 463.3L1229 463.1L1228 463.3L1227 464.1L1226 463.7L1225 464.4L1224 464.5L1223 463.6L1222 465.5L1221 463.3L1220 464.5L1219 463.0L1218 464.5L1217 463.9L1216 463.2L1215 463.7L1214 464.1L1213 463.2L1212 464.0L1211 464.1L1210 463.1L1209 463.5L1208 465.3L1207 464.6L1206 464.6L1205 464.1L1204 463.8L1203 463.4L1202 463.4L1201 463.9L1200 463.6L1199 463.6L1198 463.7L1197 463.2L1196 463.0L1195 465.0L1194 463.5L1193 464.1L1192 463.2L1191 464.2L1190 463.6L1189 463.5L1188 463.2L1187 463.3L1186 464.6L1185 463.8L1184 463.5L1183 466.4L1182 464.5L1181 463.1L1180 464.9L1179 464.2L1178 465.0L1177 463.6L1176 464.4L1175 465.0L1174 464.8L1173 463.8L1172 463.7L1171 463.9L1170 463.6L1169 463.1L1168 463.5L1167 463.0L1166 463.7L1165 465.7L1164 464.1L1163 464.0L1162 464.2L1161 463.0L1160 466.1L1159 463.3L1158 463.7L1157 467.3L1156 463.6L1155 463.8L1154 463.6L1153 463.0L1152 463.5L1151 463.3L1150 465.8L1149 463.5L1148 465.8L1147 464.4L1146 464.2L1145 464.3L1144 464.0L1143 463.5L1142 463.4L1141 466.9L1140 463.0L1139 464.0L1138 464.3L1137 463.1L1136 464.6L1135 463.6L1134 464.6L1133 463.7L1132 464.5L1131 463.0L1130 464.5L1129 463.5L1128 463.6L1127 466.7L1126 462.9L1125 463.1L1124 463.3L1123 463.4L1122 463.4L1121 463.2L1120 463.6L1119 463.9L1118 464.6L1117 464.4L1116 463.3L1115 465.1L1114 464.4L1113 464.4L1112 462.9L1111 463.6L1110 465.9L1109 464.3L1108 462.9L1107 464.1L1106 466.4L1105 464.5L1104 465.8L1103 463.0L1102 463.2L1101 463.0L1100 466.2L1099 463.0L1098 464.3L1097 466.3L1096 466.5L1095 466.0L1094 463.1L1093 464.6L1092 463.5L1091 464.2L1090 464.5L1089 463.1L1088 466.7L1087 464.3L1086 464.0L1085 464.4L1084 465.4L1083 464.6L1082 464.0L1081 463.3L1080 463.8L1079 463.1L1078 463.2L1077 466.5L1076 464.0L1075 464.5L1074 463.2L1073 464.5L1072 464.1L1071 465.5L1070 464.4L1069 463.8L1068 463.5L1067 463.4L1066 465.6L1065 464.0L1064 463.3L1063 465.0L1062 463.3L1061 463.8L1060 463.3L1059 466.4L1058 463.7L1057 464.0L1056 462.9L1055 464.5L1054 464.3L1053 463.3L1052 463.8L1051 463.2L1050 464.1L1049 463.8L1048 466.5L1047 464.4L1046 463.5L1045 464.2L1044 463.9L1043 465.1L1042 463.8L1041 464.2L1040 464.0L1039 464.3L1038 463.5L1037 463.3L1036 464.2L1035 464.0L1034 464.1L1033 464.0L1032 463.5L1031 464.5L1030 463.4L1029 466.1L1028 465.2L1027 463.4L1026 464.2L1025 463.3L1024 463.1L1023 463.2L1022 463.9L1021 463.1L1020 464.0L1019 464.0L1018 463.2L1017 464.4L1016 463.3L1015 466.6L1014 463.3L1013 463.5L1012 463.3L1011 464.1L1010 463.6L1009 463.4L1008 463.0L1007 464.2L1006 465.0L1005 466.3L1004 464.4L1003 464.0L1002 464.1L1001 464.4L1000 463.4L999 466.5L998 463.7L997 464.5L996 462.9L995 462.9L994 464.5L993 463.6L992 463.9L991 464.2L990 465.1L989 464.3L988 464.2L987 464.4L986 463.5L985 463.0L984 463.6L983 464.0L982 463.8L981 463.4L980 465.7L979 463.9L978 463.1L977 464.4L976 464.0L975 464.0L974 464.5L973 464.6L972 464.3L971 464.6L970 463.8L969 464.4L968 463.5L967 464.6L966 464.3L965 463.9L964 464.6L963 466.0L962 463.6L961 463.3L960 463.1L959 463.3L958 463.7L957 463.1L956 463.6L955 463.2L954 463.7L953 463.1L952 465.7L951 464.2L950 467.2L949 463.3L948 463.2L947 463.0L946 464.4L945 463.5L944 463.1L943 465.9L942 464.0L941 463.9L940 464.0L939 464.2L938 465.0L937 464.0L936 464.1L935 463.3L934 463.2L933 463.5L932 463.0L931 464.7L930 463.2L929 464.3L928 463.6L927 464.4L926 463.1L925 463.1L924 465.8L923 464.0L922 463.5L921 464.5L920 463.2L919 465.3L918 463.8L917 463.2L916 464.4L915 463.7L914 465.0L913 464.6L912 463.4L911 463.8L910 464.3L909 464.1L908 466.7L907 465.6L906 466.6L905 464.4L904 463.0L903 463.8L902 466.2L901 463.3L900 464.2L899 463.9L898 464.4L897 466.7L896 465.3L895 463.0L894 464.6L893 466.5L892 463.7L891 463.2L890 464.2L889 463.7L888 464.6L887 463.9L886 463.9L885 463.9L884 464.5L883 464.2L882 464.3L881 463.1L880 463.1L879 463.4L878 464.3L877 463.8L876 463.1L875 463.5L874 463.4L873 467.1L872 464.4L871 465.6L870 463.6L869 466.8L868 463.0L867 463.3L866 463.6L865 463.1L864 466.3L863 463.5L862 463.0L861 463.6L860 464.5L859 464.0L858 463.4L857 464.4L856 464.2L855 465.4L854 464.1L853 463.7L852 463.5L851 463.3L850 463.1L849 463.9L848 463.7L847 463.5L846 463.2L845 463.2L844 463.6L843 463.9L842 463.4L841 463.4L840 463.6L839 463.0L838 464.2L837 464.5L836 463.0L835 464.8L834 465.4L833 463.3L832 463.9L831 462.9L830 464.7L829 464.5L828 465.1L827 463.3L826 464.3L825 464.0L824 463.4L823 463.2L822 463.3L821 463.6L820 464.3L819 463.1L818 463.5L817 466.5L816 463.7L815 464.2L814 463.1L813 464.0L812 463.3L811 465.0L810 463.9L809 463.9L808 464.1L807 463.5L806 463.9L805 464.2L804 463.9L803 462.9L802 462.9L801 463.6L800 464.5L799 463.8L798 463.4L797 464.3L796 463.5L795 463.5L794 463.5L793 464.6L792 463.5L791 463.1L790 463.3L789 463.2L788 465.6L787 464.4L786 463.9L785 463.2L784 463.4L783 464.2L782 466.8L781 464.0L780 465.3L779 463.2L778 464.2L777 463.7L776 465.6L775 462.9L774 463.1L773 463.3L772 463.9L771 464.4L770 464.1L769 463.6L768 464.5L767 463.9L766 464.3L765 463.1L764 462.9L763 463.0L762 467.3L761 464.6L760 463.5L759 464.6L758 463.7L757 465.7L756 464.5L755 464.8L754 464.2L753 463.1L752 464.7L751 464.3L750 464.6L749 466.6L748 464.5L747 463.8L746 464.9L745 463.6L744 463.0L743 463.2L742 464.6L741 463.4L740 463.6L739 463.5L738 464.4L737 464.1L736 463.6L735 464.5L734 463.5L733 464.9L732 463.6L731 466.9L730 465.1L729 464.1L728 463.7L727 466.2L726 464.2L725 463.1L724 464.8L723 463.6L722 463.4L721 463.0L720 464.5L719 464.4L718 464.6L717 463.1L716 463.1L715 463.6L714 463.3L713 463.7L712 466.3L711 464.2L710 464.6L709 466.5L708 465.8L707 464.2L706 464.4L705 464.3L704 463.9L703 465.4L702 465.6L701 464.2L700 464.2L699 464.4L698 463.9L697 464.9L696 465.6L695 464.4L694 463.2L693 463.6L692 463.5L691 464.1L690 463.0L689 464.4L688 464.5L687 463.4L686 463.6L685 463.7L684 464.4L683 463.5L682 464.0L681 464.1L680 464.1L679 464.0L678 463.5L677 464.5L676 463.6L675 463.8L674 463.4L673 463.0L672 463.0L671 464.4L670 464.3L669 464.1L668 463.6L667 463.0L666 464.4L665 464.3L664 466.7L663 466.7L662 463.4L661 464.4L660 463.3L659 466.4L658 464.5L657 464.5L656 464.1L655 464.4L654 463.1L653 464.0L652 464.6L651 464.6L650 463.1L649 463.7L648 463.6L647 464.1L646 463.0L645 464.2L644 463.6L643 465.4L642 464.2L641 466.0L640 464.7L639 464.3L638 463.9L637 467.1L636 464.1L635 464.1L634 463.6L633 464.5L632 464.0L631 463.6L630 463.8L629 463.3L628 464.1L627 464.4L626 463.2L625 466.3L624 463.6L623 463.3L622 464.2L621 463.3L620 463.3L619 463.5L618 463.1L617 464.5L616 463.4L615 464.2L614 463.4L613 463.2L612 463.9L611 463.6L610 465.1L609 463.8L608 464.6L607 464.4L606 463.2L605 464.5L604 464.4L603 462.9L602 464.4L601 464.0L600 463.5L599 464.5L598 463.8L597 464.5L596 464.5L595 464.2L594 463.8L593 463.2L592 463.7L591 463.4L590 464.2L589 463.1L588 463.9L587 467.2L586 463.8L585 463.0L584 464.5L583 463.3L582 462.9L581 463.8L580 464.5L579 463.3L578 463.9L577 464.4L576 463.6L575 463.3L574 463.9L573 463.6L572 462.9L571 464.4L570 463.0L569 465.8L568 466.3L567 465.5L566 463.1L565 464.6L564 464.5L563 465.1L562 464.1L561 464.7L560 465.5L559 463.7L558 463.0L557 464.2L556 466.4L555 463.5L554 463.0L553 463.2L552 463.1L551 464.5L550 464.9L549 463.3L548 465.7L547 464.2L546 464.1L545 463.8L544 463.7L543 463.1L542 464.3L541 463.5L540 464.3L539 463.1L538 464.4L537 463.6L536 463.2L535 464.3L534 463.5L533 463.1L532 465.5L531 464.4L530 464.6L529 463.6L528 463.0L527 464.1L526 463.3L525 464.5L524 463.4L523 467.1L522 463.8L521 466.6L520 464.4L519 464.3L518 463.3L517 463.9L516 463.2L515 463.9L514 464.0L513 463.8L512 464.3L511 464.1L510 464.4L509 465.6L508 463.4L507 463.9L506 463.6L505 463.4L504 466.1L503 465.4L502 463.5L501 464.7L500 463.0L499 463.9L498 464.4L497 463.0L496 464.1L495 463.6L494 464.1L493 464.4L492 463.1L491 463.3L490 462.9L489 463.1L488 464.4L487 464.1L486 463.2L485 463.6L484 463.9L483 463.9L482 464.2L481 464.3L480 463.9L479 464.3L478 463.3L477 464.1L476 463.7L475 464.3L474 463.0L473 463.8L472 466.9L471 463.7L470 464.0L469 463.4L468 463.7L467 463.7L466 463.8L465 463.9L464 465.9L463 463.1L462 465.3L461 465.3L460 465.8L459 463.0L458 463.1L457 464.4L456 463.4L455 463.2L454 464.0L453 464.5L452 463.9L451 463.2L450 463.2L449 463.3L448 463.2L447 464.4L446 463.7L445 466.4L444 463.9L443 464.4L442 463.7L441 466.0L440 464.6L439 463.4L438 464.6L437 464.1L436 463.8L435 462.9L434 463.4L433 463.2L432 464.1L431 463.4L430 463.9L429 463.7L428 463.3L427 466.0L426 464.0L425 464.1L424 463.8L423 464.4L422 466.7L421 463.8L420 466.3L419 466.5L418 463.7L417 463.3L416 464.5L415 464.9L414 464.6L413 464.6L412 463.1L411 463.6L410 463.2L409 463.7L408 463.1L407 463.9L406 463.6L405 463.3L404 463.7L403 463.6L402 463.0L401 463.4L400 463.5L399 463.0L398 463.6L397 464.1L396 465.7L395 463.8L394 464.5L393 464.0L392 463.7L391 464.1L390 462.9L389 463.0L388 464.2L387 463.7L386 464.4L385 463.6L384 463.8L383 463.2L382 464.3L381 464.3L380 463.8L379 464.1L378 464.6L377 463.5L376 463.1L375 464.4L374 464.3L373 463.8L372 463.0L371 464.0L370 463.9L369 463.4L368 466.2L367 464.5L366 466.1L365 463.5L364 466.8L363 464.1L362 463.7L361 463.6L360 464.0L359 463.8L358 464.1L357 463.9L356 463.3L355 464.2L354 463.1L353 463.8L352 463.5L351 464.4L350 463.0L349 464.0L348 464.2L347 466.4L346 463.2L345 464.0L344 463.3L343 464.2L342 464.2L341 463.7L340 463.5L339 465.8L338 463.6L337 463.3L336 463.9L335 463.5L334 463.6L333 463.5L332 464.0L331 464.3L330 464.4L329 466.6L328 464.3L327 463.6L326 463.0L325 463.0L324 466.0L323 465.0L322 464.0L321 463.1L320 463.7L319 463.6L318 463.2L317 462.9L316 463.3L315 466.1L314 463.1L313 463.1L312 463.5L311 462.9L310 464.4L309 463.4L308 464.0L307 463.7L306 464.0L305 464.2L304 465.5L303 463.1L302 464.2L301 464.6L300 464.2L299 464.2L298 464.1L297 463.9L296 464.0L295 464.2L294 463.7L293 463.4L292 463.5L291 464.6L290 463.9L289 463.7L288 463.9L287 463.5L286 463.2L285 463.7L284 465.0L283 463.3L282 462.9L281 464.0L280 464.2L279 463.3L278 463.0L277 464.4L276 463.4L275 463.4L274 464.5L273 463.8L272 463.6L271 464.0L270 466.3L269 463.9L268 463.0L267 464.0L266 463.2L265 463.1L264 464.5L263 466.1L262 464.3L261 463.2L260 464.0L259 463.1L258 465.3L257 463.1L256 463.7L255 463.8L254 463.0L253 464.4L252 466.6L251 463.4L250 463.7L249 463.8L248 463.0L247 464.2L246 463.9L245 465.0L244 463.8L243 463.7L242 464.6L241 462.9L240 464.0L239 463.8L238 463.5L237 464.0L236 464.4L235 464.2L234 463.6L233 463.6L232 464.3L231 464.6L230 464.1L229 464.3L228 463.6L227 466.6L226 464.2L225 463.6L224 462.9L223 464.0L222 463.2L221 465.8L220 465.4L219 464.0L218 463.4L217 464.0L216 464.4L215 463.7L214 464.1L213 464.1L212 463.1L211 467.1L210 463.7L209 463.9L208 463.0L207 464.5L206 463.6L205 463.8L204 464.7L203 463.4L202 463.8L201 467.2L200 463.8L199 464.6L198 463.5L197 464.0L196 463.4L195 463.8L194 464.5L193 463.1L192 463.5L191 463.2L190 462.9L189 466.3L188 463.7L187 464.5L186 463.1L185 464.3L184 463.1L183 463.3L182 464.3L181 463.3L180 463.7L179 463.1L178 463.6L177 464.8L176 463.8L175 463.4L174 464.2L173 464.2L172 465.3L171 463.9L170 463.1L169 464.2L168 463.2L167 463.9L166 464.5L165 464.0L164 464.6L163 466.5L162 464.4L161 464.1L160 463.6L159 463.4L158 463.0L157 463.5L156 464.5L155 463.4L154 463.0L153 463.9L152 463.5L151 463.1L150 466.8L149 463.1L148 465.3L147 465.2L146 464.3L145 465.4L144 464.9L143 464.3L142 464.1L141 463.9L140 464.0L139 463.6L138 463.9L137 464.4L136 464.5L135 466.0L134 464.9L133 464.4L132 464.3L131 464.2L130 463.4L129 463.0L128 463.9L127 464.1L126 464.1L125 464.5L124 465.8L123 464.3L122 465.9L121 464.3L120 463.3L119 465.0L118 463.0L117 463.9L116 463.7L115 464.3L114 465.2L113 465.3L112 464.4L111 464.4L110 463.2L109 463.4L108 464.3L107 464.4L106 463.1L105 463.6L104 464.3L103 463.0L102 463.7L101 463.5L100 464.4L99 464.7L98 464.5L97 464.1L96 463.1L95 463.0L94 463.8L93 463.2L92 463.4L91 464.4L90 464.0L89 464.1L88 466.1L87 463.2L86 464.8L85 462.9L84 465.7L83 463.8L82 464.3L81 463.5L80 465.9L79 464.5L78 465.6L77 463.1L76 463.2L75 464.9L74 463.8L73 464.9L72 463.4L71 463.9L70 464.0L69 465.2L68 463.3L67 464.6L66 464.3L65 463.2L64 463.1L63 464.1L62 464.3L61 464.0L60 463.8L59 463.9L58 463.4L57 464.2L56 463.4L55 464.2L54 465.8L53 465.3L52 463.7L51 464.5L50 463.6L49 465.8L48 463.9L47 463.1L46 464.3L45 463.9L44 465.9L43 463.9L42 464.8L41 464.0L40 462.9L39 463.6L38 466.5L37 463.2L36 464.1L35 464.2L34 464.3L33 462.9L32 464.1L31 463.5L30 464.2L29 463.1L28 464.6L27 463.7L26 464.3L25 463.2L24 464.5L23 463.0L22 464.3L21 464.6L20 463.0L19 464.5L18 463.1L17 464.2L16 463.5L15 465.2L14 464.3L13 466.6L12 463.5L11 463.0L10 464.4L9 466.6L8 463.3L7 464.3L6 462.9L5 463.1L4 462.9L3 464.2Z" fill="#2929d0"/><path d="M45 460.5H1720" stroke="#e6e0c8" stroke-width="1" stroke-dasharray="5 5" fill="none"/><path d="M-2.5 734.9L-0.8 736.0L0.9 737.4L2.6 740.4L4.3 743.7L6.0 745.2L7.7 747.3L9.3 750.8L11.0 751.9L12.7 754.6L14.4 758.5L16.1 760.2L17.8 761.9L19.5 765.7L19.5 768.2L17.8 767.4L16.1 764.5L14.4 762.4L12.7 760.4L11.0 758.2L9.3 754.5L7.7 752.4L6.0 749.6L4.3 747.7L2.6 745.0L0.9 743.0L-0.8 741.0L-2.5 738.0ZM19.5 734.6L21.2 735.5L22.9 738.3L24.6 739.6L26.4 742.3L28.1 744.5L29.8 747.3L31.5 750.1L33.2 753.4L34.9 754.7L36.7 757.1L38.4 760.5L40.1 762.9L41.8 764.5L41.8 768.4L40.1 767.6L38.4 765.1L36.7 763.5L34.9 759.8L33.2 757.7L31.5 755.7L29.8 753.2L28.1 750.9L26.4 747.2L24.6 744.8L22.9 741.9L21.2 740.2L19.5 737.8ZM41.8 734.4L43.4 734.8L45.1 737.0L46.7 739.8L48.3 741.6L49.9 744.5L51.6 746.5L53.2 748.8L54.8 751.2L56.5 753.9L58.1 754.9L59.7 757.4L61.3 759.3L63.0 762.5L64.6 763.8L64.6 767.7L63.0 767.7L61.3 765.8L59.7 763.0L58.1 760.2L56.5 758.7L54.8 755.2L53.2 753.7L51.6 752.0L49.9 748.4L48.3 746.9L46.7 744.6L45.1 742.5L43.4 739.8L41.8 738.3ZM64.6 734.4L66.2 734.2L67.9 737.9L69.5 739.0L71.1 741.2L72.8 744.5L74.4 746.5L76.0 749.5L77.7 750.4L79.3 752.9L81.0 756.1L82.6 757.9L84.2 761.1L85.9 762.0L87.5 764.3L87.5 768.0L85.9 768.0L84.2 764.8L82.6 763.4L81.0 761.5L79.3 758.3L77.7 756.9L76.0 753.4L74.4 750.8L72.8 748.7L71.1 746.0L69.5 744.4L67.9 742.7L66.2 739.2L64.6 737.1ZM87.5 734.9L89.1 735.2L90.7 737.1L92.3 739.5L93.9 743.0L95.5 744.2L97.1 746.6L98.8 749.2L100.4 750.6L102.0 754.3L103.6 756.7L105.2 758.8L106.8 760.2L108.4 762.7L110.0 765.0L110.0 768.1L108.4 767.4L106.8 764.8L105.2 763.8L103.6 760.8L102.0 757.9L100.4 755.7L98.8 754.8L97.1 751.3L95.5 750.0L93.9 747.3L92.3 745.6L90.7 741.7L89.1 739.9L87.5 737.7ZM110.0 734.4L111.6 734.7L113.3 736.7L114.9 738.9L116.5 742.5L118.2 744.7L119.8 746.8L121.5 749.0L123.1 751.2L124.7 753.4L126.4 754.8L128.0 757.8L129.6 759.3L131.3 762.2L132.9 764.3L132.9 767.8L131.3 767.4L129.6 764.4L128.0 762.9L126.4 760.1L124.7 757.9L123.1 755.1L121.5 753.9L119.8 751.6L118.2 749.4L116.5 746.6L114.9 744.9L113.3 742.7L111.6 739.0L110.0 737.9ZM132.9 733.8L134.6 735.0L136.2 735.8L137.9 739.3L139.6 742.1L141.2 744.5L142.9 745.7L144.6 748.3L146.2 750.6L147.9 753.2L149.5 755.8L151.2 758.8L152.9 760.8L154.5 762.2L156.2 765.2L156.2 768.2L154.5 768.1L152.9 765.7L151.2 762.9L149.5 760.2L147.9 758.1L146.2 755.8L144.6 752.7L142.9 751.1L141.2 749.3L139.6 745.7L137.9 744.9L136.2 741.4L134.6 739.8L132.9 737.0ZM156.2 736.4L157.8 737.5L159.5 739.2L161.1 740.9L162.8 743.6L164.4 745.9L166.1 748.2L167.7 751.3L169.4 753.4L171.0 755.0L172.7 757.1L174.3 760.6L176.0 762.8L177.6 764.8L177.6 768.0L176.0 767.0L174.3 764.9L172.7 762.1L171.0 761.4L169.4 758.4L167.7 756.6L166.1 753.9L164.4 751.8L162.8 749.3L161.1 747.0L159.5 744.6L157.8 741.8L156.2 740.3ZM177.6 733.1L179.2 734.1L180.8 735.4L182.4 738.3L184.0 740.0L185.6 741.8L187.2 745.3L188.8 747.7L190.4 749.9L192.0 752.1L193.6 753.2L195.2 756.4L196.8 758.9L198.4 761.0L200.0 763.6L201.6 766.1L201.6 768.4L200.0 768.4L198.4 765.4L196.8 763.0L195.2 761.4L193.6 758.9L192.0 756.5L190.4 754.6L188.8 752.4L187.2 750.4L185.6 747.3L184.0 744.9L182.4 743.3L180.8 740.3L179.2 739.3L177.6 736.1ZM201.6 733.6L203.3 735.1L204.9 736.5L206.6 740.3L208.2 742.7L209.9 744.6L211.6 747.4L213.2 749.2L214.9 752.2L216.6 755.4L218.2 757.3L219.9 759.5L221.5 761.8L223.2 766.0L223.2 768.2L221.5 768.2L219.9 765.6L218.2 762.0L216.6 759.7L214.9 756.5L213.2 755.3L211.6 751.5L209.9 750.2L208.2 746.7L206.6 744.5L204.9 741.4L203.3 739.5L201.6 736.7ZM223.2 733.6L224.8 734.6L226.5 736.0L228.1 738.7L229.7 740.8L231.3 744.1L233.0 746.4L234.6 747.8L236.2 751.6L237.9 753.0L239.5 756.1L241.1 758.9L242.7 760.2L244.4 763.5L246.0 764.6L246.0 768.4L244.4 767.2L242.7 765.8L241.1 763.1L239.5 760.0L237.9 757.8L236.2 755.9L234.6 752.8L233.0 751.3L231.3 748.5L229.7 746.0L228.1 743.9L226.5 741.7L224.8 738.4L223.2 737.1ZM246.0 736.9L247.7 738.2L249.3 740.5L251.0 742.8L252.7 744.8L254.3 747.2L256.0 750.6L257.7 752.0L259.3 754.8L261.0 757.1L262.7 760.0L264.3 761.8L266.0 764.4L266.0 768.2L264.3 767.4L262.7 765.8L261.0 763.3L259.3 759.6L257.7 758.3L256.0 755.7L254.3 752.5L252.7 749.5L251.0 747.6L249.3 744.2L247.7 743.1L246.0 740.0ZM266.0 736.1L267.6 736.5L269.2 739.0L270.9 741.0L272.5 743.7L274.1 746.0L275.7 748.9L277.3 751.2L278.9 755.1L280.5 757.5L282.2 758.9L283.8 762.6L285.4 764.6L285.4 767.6L283.8 766.2L282.2 764.2L280.5 762.0L278.9 759.2L277.3 756.6L275.7 754.8L274.1 751.9L272.5 748.8L270.9 746.8L269.2 743.7L267.6 742.2L266.0 739.4ZM285.4 737.7L287.1 737.5L288.7 740.0L290.4 743.8L292.0 745.7L293.7 747.5L295.4 750.2L297.0 753.0L298.7 755.4L300.3 757.7L302.0 761.0L303.6 762.5L305.3 764.7L305.3 768.2L303.6 768.2L302.0 765.8L300.3 762.7L298.7 759.9L297.0 757.7L295.4 755.0L293.7 753.4L292.0 750.8L290.4 747.7L288.7 745.7L287.1 743.3L285.4 740.1ZM305.3 739.4L306.9 739.7L308.6 742.3L310.2 745.5L311.9 747.0L313.5 750.0L315.2 752.6L316.8 754.9L318.5 757.6L320.1 759.7L321.8 761.7L323.4 765.1L323.4 767.9L321.8 767.8L320.1 765.2L318.5 762.6L316.8 759.8L315.2 758.0L313.5 754.2L311.9 753.0L310.2 749.5L308.6 748.3L306.9 745.1L305.3 741.7ZM323.4 732.7L325.1 732.7L326.7 736.4L328.4 737.9L330.1 740.1L331.8 742.8L333.4 746.0L335.1 748.0L336.8 750.9L338.4 753.2L340.1 755.6L341.8 758.4L343.5 760.0L345.1 763.4L346.8 765.0L346.8 768.3L345.1 768.3L343.5 765.2L341.8 762.1L340.1 759.9L338.4 758.2L336.8 755.8L335.1 753.4L333.4 750.1L331.8 747.7L330.1 745.2L328.4 742.6L326.7 740.4L325.1 738.9L323.4 735.3ZM346.8 736.9L348.5 736.9L350.2 740.2L351.9 743.4L353.6 745.5L355.3 748.7L357.0 751.9L358.7 754.9L360.4 756.9L362.1 759.4L363.8 763.0L365.5 765.6L365.5 768.1L363.8 767.3L362.1 764.7L360.4 761.4L358.7 759.4L357.0 756.9L355.3 753.7L353.6 751.2L351.9 747.9L350.2 745.7L348.5 742.5L346.8 740.0ZM365.5 736.1L367.1 736.9L368.7 738.4L370.4 741.2L372.0 742.9L373.6 745.3L375.2 747.8L376.9 749.4L378.5 752.1L380.1 754.6L381.7 755.9L383.3 758.2L385.0 761.3L386.6 762.9L388.2 765.0L388.2 767.9L386.6 767.9L385.0 765.1L383.3 763.5L381.7 761.6L380.1 758.4L378.5 756.9L376.9 753.8L375.2 752.7L373.6 750.6L372.0 747.3L370.4 745.1L368.7 744.2L367.1 740.8L365.5 738.4ZM388.2 734.5L389.9 734.8L391.6 736.5L393.2 738.7L394.9 741.5L396.6 744.7L398.3 746.2L399.9 749.0L401.6 751.8L403.3 754.1L405.0 755.2L406.7 758.6L408.3 761.0L410.0 762.7L411.7 765.2L411.7 768.0L410.0 767.2L408.3 765.6L406.7 762.7L405.0 761.1L403.3 758.1L401.6 755.7L399.9 754.3L398.3 751.7L396.6 748.9L394.9 746.9L393.2 745.0L391.6 741.5L389.9 739.4L388.2 738.1ZM411.7 733.3L413.4 733.9L415.0 737.1L416.7 739.5L418.4 742.3L420.0 744.5L421.7 747.8L423.4 748.9L425.1 751.9L426.7 754.5L428.4 756.9L430.1 760.1L431.7 762.4L433.4 764.8L433.4 768.2L431.7 768.1L430.1 764.6L428.4 762.4L426.7 759.7L425.1 756.7L423.4 754.3L421.7 751.5L420.0 748.9L418.4 747.5L416.7 743.9L415.0 741.6L413.4 738.8L411.7 736.4ZM433.4 735.5L435.1 735.7L436.8 738.2L438.5 740.3L440.3 742.5L442.0 746.0L443.7 748.8L445.4 750.5L447.1 753.5L448.8 755.4L450.6 757.5L452.3 759.8L454.0 762.1L455.7 765.0L455.7 768.4L454.0 767.9L452.3 766.0L450.6 763.6L448.8 761.0L447.1 758.6L445.4 755.3L443.7 753.1L442.0 751.6L440.3 748.1L438.5 745.5L436.8 744.3L435.1 741.5L433.4 738.0ZM455.7 733.6L457.4 734.4L459.1 736.7L460.8 739.7L462.5 741.3L464.2 744.4L465.9 746.7L467.5 748.7L469.2 750.4L470.9 753.3L472.6 756.2L474.3 757.6L476.0 759.5L477.7 762.5L479.4 764.7L479.4 768.2L477.7 767.4L476.0 764.9L474.3 763.5L472.6 760.3L470.9 758.6L469.2 755.6L467.5 753.3L465.9 751.0L464.2 748.9L462.5 746.7L460.8 743.2L459.1 740.9L457.4 738.5L455.7 737.0ZM479.4 735.5L481.0 735.6L482.7 738.4L484.3 741.1L485.9 743.1L487.5 745.2L489.2 746.5L490.8 749.1L492.4 750.8L494.1 753.5L495.7 755.4L497.3 757.4L498.9 760.8L500.6 762.8L502.2 764.2L502.2 767.9L500.6 767.9L498.9 764.9L497.3 762.8L495.7 760.2L494.1 758.1L492.4 757.0L490.8 754.3L489.2 751.4L487.5 748.9L485.9 747.3L484.3 745.0L482.7 743.5L481.0 741.4L479.4 738.3ZM502.2 733.6L503.8 734.2L505.4 735.6L507.0 738.0L508.6 741.2L510.2 743.0L511.8 745.7L513.5 747.6L515.1 751.3L516.7 752.9L518.3 755.9L519.9 758.3L521.5 759.6L523.1 762.7L524.7 764.5L524.7 767.8L523.1 766.8L521.5 764.2L519.9 763.2L518.3 760.4L516.7 758.6L515.1 755.9L513.5 753.9L511.8 751.7L510.2 748.0L508.6 746.5L507.0 744.5L505.4 740.7L503.8 739.7L502.2 736.4ZM524.7 738.2L526.3 738.4L527.9 740.6L529.6 743.1L531.2 745.8L532.8 747.0L534.4 750.4L536.1 752.5L537.7 754.5L539.3 756.7L540.9 759.3L542.6 761.6L544.2 763.6L545.8 765.6L545.8 768.5L544.2 767.7L542.6 765.2L540.9 763.7L539.3 761.5L537.7 758.8L536.1 756.8L534.4 755.4L532.8 752.0L531.2 749.9L529.6 748.4L527.9 745.6L526.3 743.3L524.7 741.2ZM545.8 736.6L547.4 736.7L549.1 739.2L550.7 741.7L552.4 743.8L554.0 746.8L555.6 747.9L557.3 750.4L558.9 753.0L560.5 755.3L562.2 758.0L563.8 760.8L565.5 762.5L567.1 765.7L567.1 768.2L565.5 768.0L563.8 766.0L562.2 762.7L560.5 760.6L558.9 758.0L557.3 755.4L555.6 753.8L554.0 751.7L552.4 749.8L550.7 747.1L549.1 744.8L547.4 741.7L545.8 740.2ZM567.1 733.6L568.7 734.2L570.3 736.0L572.0 739.8L573.6 742.0L575.2 744.1L576.8 746.6L578.5 750.3L580.1 752.2L581.7 754.2L583.3 756.3L585.0 759.0L586.6 762.0L588.2 765.4L588.2 767.8L586.6 767.8L585.0 764.6L583.3 762.3L581.7 760.4L580.1 756.5L578.5 754.1L576.8 751.8L575.2 749.0L573.6 747.2L572.0 744.2L570.3 742.3L568.7 739.3L567.1 737.0ZM588.2 733.6L589.8 733.6L591.4 736.6L593.0 738.6L594.6 741.0L596.2 743.3L597.8 744.6L599.4 747.9L601.0 748.8L602.6 751.0L604.2 754.3L605.8 755.4L607.4 759.0L609.0 760.9L610.6 762.4L612.2 765.0L612.2 767.9L610.6 767.5L609.0 765.5L607.4 762.6L605.8 760.9L604.2 758.6L602.6 756.7L601.0 754.3L599.4 752.9L597.8 750.2L596.2 747.9L594.6 746.0L593.0 743.8L591.4 740.6L589.8 739.7L588.2 735.9ZM612.2 733.6L613.8 734.6L615.4 736.7L617.0 739.1L618.6 741.2L620.2 743.7L621.8 745.6L623.5 748.0L625.1 750.7L626.7 753.4L628.3 755.9L629.9 758.1L631.5 759.8L633.1 762.1L634.7 765.3L634.7 768.2L633.1 768.2L631.5 765.8L629.9 763.2L628.3 759.9L626.7 758.2L625.1 755.4L623.5 754.2L621.8 750.8L620.2 747.9L618.6 746.7L617.0 744.1L615.4 740.8L613.8 738.4L612.2 736.7ZM634.7 737.3L636.4 737.9L638.1 739.9L639.9 742.4L641.6 744.9L643.3 748.1L645.0 749.6L646.7 753.0L648.4 754.8L650.1 757.9L651.9 760.9L653.6 762.5L655.3 764.5L655.3 768.3L653.6 768.3L651.9 764.9L650.1 763.5L648.4 759.9L646.7 758.3L645.0 754.8L643.3 753.6L641.6 750.1L639.9 748.6L638.1 745.2L636.4 742.5L634.7 740.0ZM655.3 733.6L657.0 734.7L658.7 737.5L660.4 738.7L662.1 741.8L663.8 743.9L665.5 747.3L667.3 749.4L669.0 751.9L670.7 754.2L672.4 757.6L674.1 760.7L675.8 763.3L677.5 765.0L677.5 768.5L675.8 767.2L674.1 764.8L672.4 762.5L670.7 760.8L669.0 757.3L667.3 754.2L665.5 752.9L663.8 749.7L662.1 747.1L660.4 744.0L658.7 742.0L657.0 739.8L655.3 736.2ZM677.5 738.9L679.2 738.6L680.9 742.4L682.5 744.4L684.2 745.6L685.9 748.1L687.6 751.0L689.3 753.6L691.0 755.7L692.7 758.8L694.3 761.0L696.0 762.6L697.7 765.4L697.7 768.1L696.0 767.9L694.3 766.2L692.7 763.1L691.0 761.0L689.3 758.1L687.6 755.8L685.9 753.2L684.2 751.7L682.5 749.8L680.9 746.8L679.2 744.0L677.5 742.1ZM697.7 735.4L699.4 735.6L701.1 737.6L702.8 739.9L704.4 742.4L706.1 745.7L707.8 746.5L709.5 749.4L711.2 750.9L712.9 753.6L714.6 755.7L716.2 758.5L717.9 761.2L719.6 762.8L721.3 765.8L721.3 768.4L719.6 768.4L717.9 765.7L716.2 764.0L714.6 761.0L712.9 759.4L711.2 756.3L709.5 754.9L707.8 751.9L706.1 749.5L704.4 747.0L702.8 744.7L701.1 742.7L699.4 740.0L697.7 738.1ZM721.3 740.5L723.0 740.7L724.6 743.9L726.3 745.7L728.0 747.4L729.6 750.8L731.3 752.6L732.9 755.6L734.6 757.3L736.3 759.2L737.9 762.6L739.6 765.3L739.6 767.7L737.9 767.7L736.3 765.5L734.6 762.0L732.9 760.9L731.3 758.1L729.6 754.7L728.0 752.5L726.3 750.3L724.6 748.4L723.0 746.7L721.3 743.9ZM739.6 735.0L741.2 735.9L742.8 738.2L744.5 740.3L746.1 741.7L747.7 744.6L749.3 746.8L751.0 749.0L752.6 752.1L754.2 753.7L755.8 755.6L757.4 758.2L759.1 760.7L760.7 763.0L762.3 765.1L762.3 768.5L760.7 767.9L759.1 766.3L757.4 763.4L755.8 760.6L754.2 759.0L752.6 755.7L751.0 753.9L749.3 751.8L747.7 749.9L746.1 746.9L744.5 745.1L742.8 743.3L741.2 740.9L739.6 737.9ZM762.3 738.9L764.0 738.6L765.7 741.8L767.3 743.2L769.0 747.1L770.7 748.7L772.4 751.7L774.1 752.9L775.8 756.2L777.5 758.1L779.1 760.3L780.8 762.6L782.5 764.4L782.5 768.1L780.8 768.1L779.1 765.8L777.5 763.3L775.8 761.0L774.1 758.0L772.4 755.7L770.7 753.9L769.0 750.9L767.3 748.6L765.7 746.3L764.0 745.1L762.3 742.0ZM782.5 735.0L784.1 734.9L785.7 737.6L787.4 740.4L789.0 743.0L790.6 746.1L792.2 747.7L793.9 750.3L795.5 753.0L797.1 754.7L798.7 758.5L800.4 761.0L802.0 763.2L803.6 765.6L803.6 768.1L802.0 768.0L800.4 764.8L798.7 762.9L797.1 760.4L795.5 758.1L793.9 755.8L792.2 753.4L790.6 750.2L789.0 748.7L787.4 746.3L785.7 743.6L784.1 741.1L782.5 737.4ZM803.6 739.6L805.2 740.7L806.8 742.4L808.5 745.2L810.1 747.4L811.7 749.0L813.3 751.8L814.9 752.8L816.5 755.2L818.1 757.1L819.8 759.9L821.4 762.0L823.0 764.5L823.0 767.8L821.4 767.1L819.8 764.9L818.1 763.1L816.5 761.3L814.9 757.9L813.3 756.5L811.7 754.1L810.1 752.4L808.5 748.6L806.8 747.4L805.2 745.1L803.6 743.4ZM823.0 735.0L824.7 735.6L826.3 737.3L828.0 739.9L829.6 742.6L831.3 744.7L832.9 747.5L834.6 748.9L836.3 752.2L837.9 753.2L839.6 755.7L841.2 759.0L842.9 760.9L844.5 762.5L846.2 764.6L846.2 768.3L844.5 768.3L842.9 765.6L841.2 763.9L839.6 761.1L837.9 758.5L836.3 756.7L834.6 754.1L832.9 752.5L831.3 750.4L829.6 747.5L828.0 744.9L826.3 742.3L824.7 740.2L823.0 737.6ZM846.2 738.2L847.8 738.0L849.5 740.8L851.1 743.6L852.7 746.4L854.3 748.6L856.0 751.1L857.6 752.7L859.2 755.8L860.8 757.4L862.5 759.1L864.1 762.4L865.7 764.9L865.7 767.7L864.1 766.9L862.5 764.7L860.8 761.9L859.2 760.1L857.6 757.7L856.0 756.2L854.3 753.5L852.7 750.5L851.1 748.3L849.5 746.6L847.8 744.0L846.2 741.2ZM865.7 739.6L867.4 740.0L869.0 742.2L870.7 744.7L872.3 746.2L874.0 749.0L875.7 751.5L877.3 753.9L879.0 755.5L880.6 757.2L882.3 759.3L883.9 761.6L885.6 764.8L885.6 767.7L883.9 767.2L882.3 764.6L880.6 763.4L879.0 760.9L877.3 758.6L875.7 756.2L874.0 754.2L872.3 751.5L870.7 749.3L869.0 746.4L867.4 744.6L865.7 742.9ZM885.6 739.6L887.3 740.9L889.1 742.4L890.8 746.0L892.5 746.9L894.2 751.1L896.0 753.5L897.7 755.3L899.4 757.1L901.1 760.8L902.9 762.7L904.6 765.6L904.6 768.5L902.9 767.7L901.1 765.8L899.4 762.2L897.7 760.5L896.0 758.3L894.2 755.2L892.5 752.5L890.8 749.4L889.1 748.1L887.3 744.7L885.6 742.4ZM904.6 739.6L906.3 740.6L907.9 741.7L909.6 744.6L911.2 746.1L912.9 749.8L914.5 750.8L916.2 754.4L917.9 756.4L919.5 758.3L921.2 760.8L922.8 763.0L924.5 765.5L924.5 768.5L922.8 768.5L921.2 764.9L919.5 764.0L917.9 761.5L916.2 759.6L914.5 757.1L912.9 753.7L911.2 751.8L909.6 749.6L907.9 746.9L906.3 744.2L904.6 743.5ZM924.5 740.5L926.2 741.0L927.9 743.2L929.6 746.3L931.3 748.0L933.0 751.4L934.6 753.5L936.3 754.5L938.0 758.1L939.7 760.0L941.4 763.0L943.1 764.1L943.1 767.9L941.4 767.0L939.7 765.9L938.0 762.4L936.3 759.9L934.6 758.2L933.0 756.1L931.3 752.9L929.6 750.5L927.9 748.8L926.2 746.8L924.5 743.1ZM943.1 737.3L944.8 737.2L946.4 739.6L948.1 742.9L949.7 745.2L951.4 747.6L953.0 749.2L954.7 751.9L956.3 754.5L958.0 755.2L959.6 757.9L961.3 760.4L962.9 762.0L964.6 765.3L964.6 768.2L962.9 768.2L961.3 765.2L959.6 763.2L958.0 760.2L956.3 758.1L954.7 755.7L953.0 753.8L951.4 751.9L949.7 749.3L948.1 747.3L946.4 744.9L944.8 743.4L943.1 739.6ZM964.6 733.6L966.3 734.1L968.0 736.6L969.6 739.7L971.3 742.3L973.0 744.0L974.7 746.5L976.3 748.7L978.0 752.0L979.7 754.0L981.4 757.0L983.0 759.4L984.7 762.0L986.4 765.3L986.4 767.7L984.7 767.7L983.0 764.1L981.4 762.0L979.7 758.9L978.0 756.8L976.3 754.0L974.7 751.7L973.0 749.2L971.3 746.1L969.6 744.1L968.0 741.1L966.3 739.3L964.6 736.9ZM986.4 735.0L988.1 734.8L989.8 737.6L991.6 741.1L993.3 743.5L995.0 745.3L996.7 747.5L998.5 750.7L1000.2 753.5L1001.9 755.5L1003.6 757.4L1005.4 760.5L1007.1 761.8L1008.8 764.8L1008.8 768.0L1007.1 768.0L1005.4 765.6L1003.6 762.5L1001.9 760.8L1000.2 758.2L998.5 755.9L996.7 752.8L995.0 750.0L993.3 747.2L991.6 745.6L989.8 743.5L988.1 739.7L986.4 738.1ZM1008.8 737.3L1010.5 738.0L1012.2 739.9L1013.8 741.6L1015.5 745.0L1017.2 747.5L1018.9 749.7L1020.5 750.9L1022.2 753.0L1023.9 755.5L1025.6 758.6L1027.2 760.3L1028.9 763.6L1030.6 764.6L1030.6 768.2L1028.9 767.1L1027.2 766.3L1025.6 763.2L1023.9 760.5L1022.2 759.4L1020.5 755.7L1018.9 753.8L1017.2 751.5L1015.5 749.3L1013.8 747.7L1012.2 745.6L1010.5 743.2L1008.8 740.6ZM1030.6 739.6L1032.2 740.0L1033.9 742.1L1035.5 745.1L1037.1 747.9L1038.7 749.3L1040.4 751.9L1042.0 755.1L1043.6 756.7L1045.2 760.3L1046.9 762.3L1048.5 765.4L1048.5 767.8L1046.9 767.8L1045.2 764.0L1043.6 761.5L1042.0 759.2L1040.4 757.1L1038.7 755.6L1037.1 752.2L1035.5 750.5L1033.9 747.5L1032.2 745.7L1030.6 742.7ZM1048.5 735.4L1050.1 735.6L1051.7 738.9L1053.4 741.0L1055.0 744.0L1056.6 745.4L1058.2 748.2L1059.9 750.4L1061.5 753.7L1063.1 754.7L1064.7 757.9L1066.4 760.8L1068.0 762.2L1069.6 765.7L1069.6 768.2L1068.0 767.8L1066.4 765.1L1064.7 763.4L1063.1 759.7L1061.5 757.2L1059.9 754.9L1058.2 752.3L1056.6 751.1L1055.0 747.6L1053.4 746.5L1051.7 742.6L1050.1 741.6L1048.5 737.9ZM1069.6 735.0L1071.2 736.1L1072.9 738.5L1074.5 740.3L1076.1 741.6L1077.8 744.1L1079.4 747.0L1081.0 749.2L1082.7 750.9L1084.3 753.1L1086.0 755.5L1087.6 758.1L1089.2 760.4L1090.9 762.1L1092.5 764.7L1092.5 768.3L1090.9 768.3L1089.2 765.5L1087.6 764.1L1086.0 760.4L1084.3 758.4L1082.7 756.2L1081.0 753.6L1079.4 752.3L1077.8 749.0L1076.1 747.2L1074.5 745.1L1072.9 743.5L1071.2 740.4L1069.6 737.3ZM1092.5 741.2L1094.2 741.5L1095.9 744.4L1097.6 745.5L1099.3 749.4L1101.0 750.2L1102.8 753.9L1104.5 755.3L1106.2 758.7L1107.9 760.2L1109.6 762.1L1111.3 764.4L1111.3 768.2L1109.6 767.1L1107.9 765.2L1106.2 762.5L1104.5 760.0L1102.8 757.8L1101.0 756.8L1099.3 753.0L1097.6 752.1L1095.9 749.5L1094.2 747.4L1092.5 743.6ZM1111.3 735.4L1112.9 735.0L1114.5 738.0L1116.1 741.1L1117.7 743.3L1119.3 745.2L1120.9 746.6L1122.5 749.8L1124.1 751.0L1125.7 754.3L1127.3 755.5L1128.9 758.5L1130.5 760.7L1132.1 763.0L1133.7 765.3L1133.7 768.1L1132.1 768.1L1130.5 766.1L1128.9 762.7L1127.3 760.9L1125.7 759.1L1124.1 756.4L1122.5 754.1L1120.9 752.9L1119.3 750.1L1117.7 747.9L1116.1 744.9L1114.5 743.6L1112.9 740.7L1111.3 737.9ZM1133.7 735.0L1135.3 735.5L1136.9 737.6L1138.5 740.5L1140.1 743.0L1141.7 744.6L1143.3 746.6L1145.0 749.7L1146.6 751.2L1148.2 753.7L1149.8 756.9L1151.4 757.9L1153.0 760.5L1154.6 763.2L1156.2 765.5L1156.2 768.4L1154.6 768.4L1153.0 765.6L1151.4 762.8L1149.8 760.6L1148.2 759.0L1146.6 755.8L1145.0 754.1L1143.3 752.6L1141.7 750.4L1140.1 747.2L1138.5 744.7L1136.9 743.2L1135.3 739.8L1133.7 738.0ZM1156.2 738.2L1157.8 737.7L1159.4 740.6L1161.1 742.5L1162.7 744.5L1164.3 748.0L1165.9 749.4L1167.6 751.7L1169.2 754.1L1170.8 755.8L1172.4 757.8L1174.1 761.1L1175.7 762.4L1177.3 765.1L1177.3 768.1L1175.7 767.2L1174.1 766.2L1172.4 763.4L1170.8 761.4L1169.2 759.1L1167.6 756.5L1165.9 755.3L1164.3 752.8L1162.7 750.3L1161.1 748.2L1159.4 745.2L1157.8 743.1L1156.2 741.0ZM1177.3 739.6L1178.9 740.5L1180.5 741.6L1182.2 743.7L1183.8 747.5L1185.4 748.4L1187.0 750.7L1188.6 752.9L1190.2 756.4L1191.8 758.6L1193.5 759.6L1195.1 761.9L1196.7 764.5L1196.7 767.7L1195.1 767.3L1193.5 765.8L1191.8 763.6L1190.2 760.1L1188.6 758.4L1187.0 756.9L1185.4 754.6L1183.8 751.9L1182.2 749.5L1180.5 747.3L1178.9 745.3L1177.3 743.1ZM1196.7 735.4L1198.3 735.7L1200.0 738.5L1201.6 740.3L1203.3 742.5L1204.9 744.3L1206.6 746.4L1208.2 750.0L1209.8 751.8L1211.5 753.5L1213.1 756.3L1214.8 757.7L1216.4 760.0L1218.1 762.3L1219.7 764.8L1219.7 768.0L1218.1 768.0L1216.4 764.8L1214.8 764.0L1213.1 760.3L1211.5 758.7L1209.8 756.1L1208.2 753.6L1206.6 751.9L1204.9 750.2L1203.3 747.8L1201.6 745.8L1200.0 742.3L1198.3 740.2L1196.7 738.2ZM1219.7 739.6L1221.4 739.6L1223.0 743.2L1224.7 744.6L1226.4 747.9L1228.0 749.2L1229.7 752.9L1231.3 755.2L1233.0 757.4L1234.7 760.0L1236.3 762.4L1238.0 765.4L1238.0 768.0L1236.3 768.0L1234.7 765.5L1233.0 762.1L1231.3 759.4L1229.7 757.5L1228.0 755.9L1226.4 753.0L1224.7 750.0L1223.0 747.9L1221.4 745.3L1219.7 742.1ZM1238.0 735.0L1239.6 735.2L1241.3 737.2L1242.9 739.2L1244.5 742.7L1246.2 745.0L1247.8 747.0L1249.5 748.9L1251.1 752.0L1252.7 753.5L1254.4 755.9L1256.0 758.1L1257.6 759.8L1259.3 763.1L1260.9 765.6L1260.9 768.2L1259.3 767.9L1257.6 765.6L1256.0 763.9L1254.4 761.4L1252.7 758.7L1251.1 755.8L1249.5 754.0L1247.8 752.2L1246.2 748.8L1244.5 747.7L1242.9 745.0L1241.3 743.5L1239.6 741.2L1238.0 737.6ZM1260.9 739.6L1262.5 740.3L1264.2 743.0L1265.8 744.0L1267.4 746.6L1269.0 748.8L1270.7 751.8L1272.3 754.2L1273.9 755.0L1275.5 757.3L1277.2 760.0L1278.8 762.3L1280.4 764.9L1280.4 768.0L1278.8 767.1L1277.2 764.7L1275.5 763.4L1273.9 760.1L1272.3 757.9L1270.7 756.0L1269.0 753.6L1267.4 751.3L1265.8 750.1L1264.2 747.4L1262.5 744.2L1260.9 742.5ZM1280.4 740.0L1282.0 740.3L1283.7 743.2L1285.3 744.4L1286.9 747.2L1288.5 749.9L1290.2 751.7L1291.8 753.9L1293.4 755.7L1295.0 757.9L1296.7 760.1L1298.3 762.8L1299.9 764.2L1299.9 767.7L1298.3 767.2L1296.7 765.3L1295.0 763.2L1293.4 760.0L1291.8 758.1L1290.2 755.6L1288.5 754.8L1286.9 751.1L1285.3 749.9L1283.7 747.3L1282.0 745.6L1280.4 743.2ZM1299.9 733.6L1301.5 734.2L1303.1 737.4L1304.8 739.5L1306.4 742.1L1308.0 744.9L1309.6 748.6L1311.2 751.0L1312.8 753.8L1314.5 757.2L1316.1 758.4L1317.7 762.0L1319.3 764.9L1319.3 767.8L1317.7 767.1L1316.1 764.5L1314.5 761.0L1312.8 758.1L1311.2 755.2L1309.6 753.5L1308.0 750.5L1306.4 748.0L1304.8 744.7L1303.1 741.8L1301.5 739.1L1299.9 737.4ZM1319.3 738.9L1320.9 739.3L1322.5 741.3L1324.1 743.3L1325.7 745.7L1327.3 749.4L1328.9 750.9L1330.5 753.2L1332.1 755.4L1333.7 758.8L1335.3 761.0L1336.9 762.3L1338.5 765.7L1338.5 768.4L1336.9 768.4L1335.3 765.3L1333.7 762.9L1332.1 761.4L1330.5 759.3L1328.9 755.5L1327.3 753.6L1325.7 750.9L1324.1 748.4L1322.5 747.3L1320.9 744.1L1319.3 741.9ZM1338.5 733.8L1340.1 735.0L1341.7 736.7L1343.4 738.7L1345.0 742.2L1346.6 743.9L1348.2 746.1L1349.8 749.4L1351.5 750.7L1353.1 754.1L1354.7 755.1L1356.3 757.5L1358.0 761.2L1359.6 763.0L1361.2 765.4L1361.2 768.5L1359.6 767.3L1358.0 765.1L1356.3 764.0L1354.7 761.2L1353.1 758.6L1351.5 755.6L1349.8 754.2L1348.2 751.0L1346.6 749.3L1345.0 746.8L1343.4 743.6L1341.7 741.0L1340.1 738.7L1338.5 736.3ZM1361.2 738.2L1362.8 739.4L1364.5 741.9L1366.1 744.3L1367.7 746.1L1369.3 748.6L1371.0 750.3L1372.6 752.7L1374.2 755.4L1375.8 758.6L1377.5 760.4L1379.1 762.0L1380.7 764.5L1380.7 768.3L1379.1 767.3L1377.5 765.3L1375.8 763.0L1374.2 760.5L1372.6 758.3L1371.0 755.6L1369.3 753.9L1367.7 751.6L1366.1 748.9L1364.5 746.3L1362.8 743.1L1361.2 741.8ZM1380.7 740.5L1382.4 741.0L1384.2 742.7L1385.9 745.2L1387.6 748.8L1389.3 750.7L1391.1 753.6L1392.8 755.9L1394.5 758.3L1396.2 760.0L1398.0 762.3L1399.7 764.2L1399.7 768.1L1398.0 768.1L1396.2 764.5L1394.5 763.1L1392.8 760.6L1391.1 758.0L1389.3 754.8L1387.6 752.5L1385.9 751.5L1384.2 747.7L1382.4 746.5L1380.7 743.6ZM1399.7 735.4L1401.4 736.7L1403.1 738.9L1404.7 741.4L1406.4 743.0L1408.1 746.2L1409.8 748.1L1411.4 751.0L1413.1 752.2L1414.8 754.7L1416.5 757.0L1418.1 759.3L1419.8 761.6L1421.5 764.6L1421.5 767.9L1419.8 767.2L1418.1 764.8L1416.5 763.0L1414.8 759.5L1413.1 757.1L1411.4 754.9L1409.8 752.4L1408.1 750.5L1406.4 747.3L1404.7 745.9L1403.1 743.9L1401.4 741.1L1399.7 738.4ZM1421.5 739.6L1423.1 740.6L1424.8 743.1L1426.4 745.5L1428.1 746.9L1429.7 749.5L1431.4 751.6L1433.0 754.7L1434.7 757.5L1436.3 759.4L1438.0 761.9L1439.6 764.0L1439.6 767.6L1438.0 766.8L1436.3 765.4L1434.7 761.7L1433.0 759.0L1431.4 757.4L1429.7 754.8L1428.1 753.0L1426.4 749.3L1424.8 747.2L1423.1 745.1L1421.5 742.2ZM1439.6 734.3L1441.2 733.9L1442.9 736.7L1444.5 738.9L1446.1 741.7L1447.8 743.1L1449.4 746.6L1451.0 748.7L1452.7 750.7L1454.3 753.1L1456.0 755.5L1457.6 757.2L1459.2 759.2L1460.9 761.8L1462.5 764.3L1462.5 767.6L1460.9 767.6L1459.2 764.6L1457.6 763.4L1456.0 760.9L1454.3 757.7L1452.7 755.4L1451.0 753.2L1449.4 752.0L1447.8 748.5L1446.1 747.1L1444.5 744.4L1442.9 741.8L1441.2 739.7L1439.6 737.8ZM1462.5 735.4L1464.2 736.4L1466.0 738.4L1467.7 741.7L1469.4 744.0L1471.1 746.6L1472.8 750.1L1474.6 751.8L1476.3 754.3L1478.0 757.2L1479.8 759.3L1481.5 762.3L1483.2 765.4L1483.2 768.1L1481.5 767.9L1479.8 764.8L1478.0 762.8L1476.3 759.9L1474.6 757.2L1472.8 753.8L1471.1 751.8L1469.4 748.7L1467.7 746.1L1466.0 743.7L1464.2 740.5L1462.5 737.8ZM1483.2 737.3L1484.8 737.0L1486.5 739.9L1488.1 742.4L1489.8 743.9L1491.4 746.6L1493.0 748.2L1494.7 751.2L1496.3 753.3L1497.9 756.6L1499.6 758.9L1501.2 760.7L1502.9 762.0L1504.5 764.9L1504.5 768.1L1502.9 767.8L1501.2 765.9L1499.6 762.8L1497.9 761.4L1496.3 759.3L1494.7 756.7L1493.0 753.7L1491.4 752.0L1489.8 749.6L1488.1 746.5L1486.5 745.3L1484.8 743.3L1483.2 740.4ZM1504.5 738.2L1506.2 739.0L1507.8 741.7L1509.5 743.7L1511.2 745.2L1512.9 747.7L1514.5 751.2L1516.2 752.3L1517.9 755.1L1519.6 757.2L1521.2 759.5L1522.9 762.1L1524.6 764.6L1524.6 767.9L1522.9 767.9L1521.2 764.5L1519.6 763.2L1517.9 760.5L1516.2 757.3L1514.5 755.1L1512.9 753.6L1511.2 750.5L1509.5 748.7L1507.8 745.5L1506.2 743.3L1504.5 740.5ZM1524.6 734.3L1526.2 735.0L1527.8 737.3L1529.5 739.4L1531.1 741.7L1532.7 744.3L1534.3 745.6L1535.9 748.2L1537.6 750.2L1539.2 754.2L1540.8 755.4L1542.4 757.3L1544.1 760.2L1545.7 762.7L1547.3 765.3L1547.3 768.0L1545.7 767.1L1544.1 765.5L1542.4 763.5L1540.8 760.4L1539.2 758.7L1537.6 755.6L1535.9 754.4L1534.3 751.7L1532.7 748.6L1531.1 747.4L1529.5 744.0L1527.8 741.9L1526.2 739.4L1524.6 737.1ZM1547.3 739.6L1549.0 740.8L1550.8 742.2L1552.5 745.0L1554.2 747.3L1555.9 750.3L1557.7 751.8L1559.4 755.1L1561.1 757.9L1562.8 760.9L1564.6 762.0L1566.3 764.9L1566.3 768.1L1564.6 768.1L1562.8 765.1L1561.1 763.3L1559.4 760.4L1557.7 758.2L1555.9 755.3L1554.2 752.9L1552.5 750.1L1550.8 747.2L1549.0 744.5L1547.3 743.4ZM1566.3 735.4L1568.0 736.4L1569.7 739.1L1571.4 741.0L1573.2 742.8L1574.9 745.9L1576.6 748.3L1578.3 750.0L1580.0 753.2L1581.7 755.4L1583.5 757.2L1585.2 761.1L1586.9 762.8L1588.6 765.3L1588.6 768.3L1586.9 768.2L1585.2 764.6L1583.5 763.2L1581.7 760.2L1580.0 758.6L1578.3 755.9L1576.6 753.8L1574.9 750.1L1573.2 748.6L1571.4 745.2L1569.7 742.8L1568.0 740.2L1566.3 738.7ZM1588.6 738.9L1590.3 740.0L1592.1 741.5L1593.8 744.5L1595.5 746.8L1597.2 750.6L1599.0 752.3L1600.7 754.5L1602.4 757.6L1604.1 760.7L1605.9 762.2L1607.6 765.1L1607.6 768.1L1605.9 768.0L1604.1 765.3L1602.4 762.6L1600.7 760.3L1599.0 756.5L1597.2 755.5L1595.5 752.5L1593.8 749.7L1592.1 747.2L1590.3 744.7L1588.6 741.8ZM1607.6 736.6L1609.3 737.9L1611.1 740.8L1612.8 742.2L1614.5 745.8L1616.2 748.2L1618.0 750.6L1619.7 754.5L1621.4 757.2L1623.1 758.3L1624.9 761.5L1626.6 763.7L1626.6 767.6L1624.9 766.9L1623.1 764.2L1621.4 761.7L1619.7 758.4L1618.0 755.8L1616.2 753.4L1614.5 750.5L1612.8 748.6L1611.1 745.4L1609.3 742.0L1607.6 739.4ZM1626.6 735.4L1628.3 735.4L1630.0 738.7L1631.7 741.5L1633.4 742.4L1635.1 746.0L1636.8 747.7L1638.6 749.5L1640.3 752.3L1642.0 754.7L1643.7 757.5L1645.4 760.8L1647.1 762.1L1648.8 764.0L1648.8 767.9L1647.1 767.0L1645.4 765.0L1643.7 761.8L1642.0 760.1L1640.3 757.1L1638.6 756.1L1636.8 753.5L1635.1 749.9L1633.4 748.4L1631.7 745.2L1630.0 743.9L1628.3 740.6L1626.6 738.0ZM1648.8 738.9L1650.4 739.2L1652.0 741.8L1653.7 743.4L1655.3 746.5L1656.9 749.4L1658.5 750.6L1660.2 753.4L1661.8 755.1L1663.4 758.2L1665.0 760.1L1666.7 762.8L1668.3 764.9L1668.3 768.4L1666.7 767.6L1665.0 765.2L1663.4 763.5L1661.8 761.5L1660.2 758.4L1658.5 756.4L1656.9 753.9L1655.3 751.4L1653.7 749.5L1652.0 746.8L1650.4 744.3L1648.8 742.6ZM1668.3 735.0L1669.9 735.2L1671.6 738.5L1673.2 740.3L1674.8 742.7L1676.5 743.7L1678.1 746.4L1679.8 749.8L1681.4 751.5L1683.0 754.5L1684.7 755.8L1686.3 757.9L1687.9 761.2L1689.6 763.6L1691.2 764.6L1691.2 768.2L1689.6 767.7L1687.9 765.0L1686.3 762.7L1684.7 760.5L1683.0 758.7L1681.4 756.9L1679.8 754.4L1678.1 751.2L1676.5 749.3L1674.8 746.8L1673.2 744.9L1671.6 742.6L1669.9 740.0L1668.3 738.2ZM1691.2 738.9L1692.8 738.7L1694.5 741.4L1696.1 744.8L1697.7 747.1L1699.3 749.2L1701.0 751.4L1702.6 753.4L1704.2 755.4L1705.8 757.4L1707.5 760.6L1709.1 762.1L1710.7 764.7L1710.7 767.9L1709.1 767.9L1707.5 765.0L1705.8 763.3L1704.2 760.5L1702.6 757.5L1701.0 756.3L1699.3 753.5L1697.7 751.0L1696.1 748.8L1694.5 747.3L1692.8 743.7L1691.2 742.6ZM1710.7 739.6L1712.4 740.5L1714.1 743.4L1715.8 744.5L1717.5 746.8L1719.2 750.3L1721.0 752.6L1722.7 754.5L1724.4 758.0L1726.1 759.3L1727.8 761.9L1729.5 764.3L1729.5 768.0L1727.8 768.0L1726.1 765.1L1724.4 761.6L1722.7 759.8L1721.0 757.8L1719.2 755.7L1717.5 752.2L1715.8 749.9L1714.1 746.9L1712.4 744.9L1710.7 742.7ZM1729.5 733.6L1731.1 734.7L1732.7 736.4L1734.3 737.5L1735.9 740.9L1737.5 743.0L1739.1 744.9L1740.7 747.0L1742.3 749.3L1743.9 752.4L1745.5 753.9L1747.1 755.7L1748.7 758.9L1750.3 760.8L1751.9 763.3L1753.5 764.5L1753.5 768.1L1751.9 767.6L1750.3 766.1L1748.7 763.2L1747.1 760.8L1745.5 758.7L1743.9 756.9L1742.3 754.9L1740.7 751.5L1739.1 749.2L1737.5 747.6L1735.9 746.2L1734.3 744.1L1732.7 741.8L1731.1 738.7L1729.5 736.0Z" fill="#00e4a0"/><path d="M-2.5 767.9V734.9M19.5 767.9V734.6M41.8 767.8V734.4M64.6 768.6V734.4M87.5 768.2V734.9M110.0 767.9V734.4M132.9 768.1V733.8M156.2 768.1V736.4M177.6 768.1V722.0M201.6 768.6V733.6M223.2 767.9V733.6M246.0 768.2V736.9M266.0 768.5V736.1M285.4 767.8V737.7M305.3 768.7V739.4M323.4 768.5V732.7M346.8 768.5V736.9M365.5 774.4V736.1M388.2 767.8V734.5M411.7 768.2V733.3M433.4 768.1V735.5M455.7 768.7V733.6M479.4 767.9V735.5M502.2 768.5V733.6M524.7 767.9V738.2M545.8 768.6V736.6M567.1 768.7V733.6M588.2 768.1V733.6M612.2 768.1V733.6M634.7 767.8V737.3M655.3 768.5V733.6M677.5 770.1V738.9M697.7 770.1V735.4M721.3 768.0V740.5M739.6 768.2V735.0M762.3 770.1V738.9M782.5 768.2V735.0M803.6 767.9V739.6M823.0 768.7V735.0M846.2 768.6V738.2M865.7 768.6V739.6M885.6 768.6V739.6M904.6 768.7V739.6M924.5 768.2V740.5M943.1 768.4V737.3M964.6 768.6V733.6M986.4 768.7V735.0M1008.8 768.6V737.3M1030.6 768.6V739.6M1048.5 768.0V735.4M1069.6 768.7V735.0M1092.5 767.9V741.2M1111.3 768.1V728.0M1133.7 768.5V735.0M1156.2 771.2V738.2M1177.3 768.3V739.6M1196.7 767.9V735.4M1219.7 768.6V739.6M1238.0 767.9V735.0M1260.9 768.4V739.6M1280.4 768.6V740.0M1299.9 768.5V733.6M1319.3 770.1V738.9M1338.5 768.3V733.8M1361.2 768.0V738.2M1380.7 767.9V740.5M1399.7 768.4V735.4M1421.5 767.9V739.6M1439.6 768.5V734.3M1462.5 768.6V735.4M1483.2 768.2V737.3M1504.5 767.8V738.2M1524.6 767.9V734.3M1547.3 768.2V739.6M1566.3 768.3V735.4M1588.6 767.9V738.9M1607.6 768.2V736.6M1626.6 768.3V735.4M1648.8 768.6V738.9M1668.3 768.7V735.0M1691.2 768.1V738.9M1710.7 768.1V739.6M1729.5 767.9V727.0" stroke="#00e4a0" stroke-width="1.15" fill="none"/><rect x="3" y="729" width="1748" height="10" fill="#fff" opacity="0.06"/><rect x="3" y="764" width="1748" height="10" fill="#fff" opacity="0.06"/><rect x="3" y="733" width="1748" height="1.12" fill="#fff"/><rect x="3" y="768" width="1748" height="1.12" fill="#fff"/><path d="M8 747.5H68L81 759.5L68 771.5H8Q6 771.5 6 769.5V749.5Q6 747.5 8 747.5Z" fill="#02140e" stroke="#00e4a0" stroke-width="1.5"/><path d="M8 747.5H34V771.5H8Q6 771.5 6 769.5V749.5Q6 747.5 8 747.5Z" fill="#00e4a0"/><rect x="69.5" y="733" width="1.2" height="29" fill="#e01010"/><path d="M8.5 447.6H29.3L41.2 460.2L29.3 472.4H8.5Q6.7 472.4 6.7 470.6V449.4Q6.7 447.6 8.5 447.6Z" fill="#05050f" stroke="#2929d0" stroke-width="1.25"/><path d="M866.8 57H887.2L877 66.6Z" fill="#f7931e"/><path d="M868 68H886V87H880.6L877 93.8L873.4 87H868Z" fill="#000" stroke="#f7931e" stroke-width="2"/></svg>
<svg width="1920" height="1079" style="left:0;top:0"><text x="876.8" y="83" font-size="15" fill="#f7931e" font-weight="700" text-anchor="middle">T</text><text x="12.68" y="465" font-size="16" fill="#fff" textLength="22.24" lengthAdjust="spacingAndGlyphs">C 6</text><text x="8.32" y="766" font-size="15" fill="#04241a" textLength="21.35" lengthAdjust="spacingAndGlyphs">C8</text><text x="41.33" y="766" font-size="15" fill="#00e4a0" textLength="23.35" lengthAdjust="spacingAndGlyphs">5 V</text><text x="1747.56" y="92" font-size="12.5" fill="#2929d0" text-anchor="end">400 mA</text><text x="1747.56" y="138.7" font-size="12.5" fill="#2929d0" text-anchor="end">350 mA</text><text x="1747.56" y="185.4" font-size="12.5" fill="#2929d0" text-anchor="end">300 mA</text><text x="1747.56" y="232.1" font-size="12.5" fill="#2929d0" text-anchor="end">250 mA</text><text x="1747.56" y="278.8" font-size="12.5" fill="#2929d0" text-anchor="end">200 mA</text><text x="1747.56" y="325.5" font-size="12.5" fill="#2929d0" text-anchor="end">150 mA</text><text x="1747.56" y="372.2" font-size="12.5" fill="#2929d0" text-anchor="end">100 mA</text><text x="1747.56" y="418.9" font-size="12.5" fill="#2929d0" text-anchor="end">50 mA</text><text x="1747.56" y="465.6" font-size="12.5" fill="#2020b0" text-anchor="end">0 A</text><text x="1747.56" y="512.3" font-size="12.5" fill="#2929d0" text-anchor="end">-50 mA</text><text x="1747.56" y="577.2" font-size="12.5" fill="#00e4a0" text-anchor="end">5.4 V</text><text x="1747.56" y="623.85" font-size="12.5" fill="#00e4a0" text-anchor="end">5.3 V</text><text x="1747.56" y="670.5" font-size="12.5" fill="#00e4a0" text-anchor="end">5.2 V</text><text x="1747.56" y="717.15" font-size="12.5" fill="#00e4a0" text-anchor="end">5.1 V</text><text x="1747.56" y="763.8" font-size="12.5" fill="#00e4a0" text-anchor="end">5 V</text><text x="1747.56" y="810.45" font-size="12.5" fill="#00e4a0" text-anchor="end">4.9 V</text><text x="1747.56" y="857.1" font-size="12.5" fill="#00e4a0" text-anchor="end">4.8 V</text><text x="1747.56" y="903.75" font-size="12.5" fill="#00e4a0" text-anchor="end">4.7 V</text><text x="1747.56" y="950.4" font-size="12.5" fill="#00e4a0" text-anchor="end">4.6 V</text><text x="178.3" y="987" font-size="12.5" fill="#c4c4c4" text-anchor="middle">-4 ms</text><text x="353.1" y="987" font-size="12.5" fill="#c4c4c4" text-anchor="middle">-3 ms</text><text x="527.9" y="987" font-size="12.5" fill="#c4c4c4" text-anchor="middle">-2 ms</text><text x="702.7" y="987" font-size="12.5" fill="#c4c4c4" text-anchor="middle">-1 ms</text><text x="877.5" y="987" font-size="12.5" fill="#c4c4c4" text-anchor="middle">0 s</text><text x="1052.3" y="987" font-size="12.5" fill="#c4c4c4" text-anchor="middle">1 ms</text><text x="1227.1" y="987" font-size="12.5" fill="#c4c4c4" text-anchor="middle">2 ms</text><text x="1401.9" y="987" font-size="12.5" fill="#c4c4c4" text-anchor="middle">3 ms</text><text x="1576.7" y="987" font-size="12.5" fill="#c4c4c4" text-anchor="middle">4 ms</text></svg>
<svg width="40" height="40" style="left:1708px;top:60px" viewBox="1708 60 40 40"><path d="M1710 63.6H1742.2Q1744.2 63.6 1744.2 65.6V98Z" fill="#4d4d4d"/><circle cx="1737.2" cy="70.3" r="4.1" fill="#5a5a5a" stroke="#b6b6b6" stroke-width="1.3"/><path d="M1733.9 73.9L1727.9 79.9" stroke="#b6b6b6" stroke-width="2.2" stroke-linecap="round"/></svg>
<svg width="1920" height="1079" style="left:0;top:0"><text x="18.94" y="396" font-size="23.5" fill="#2929d0" textLength="43.62" lengthAdjust="spacingAndGlyphs">Iout</text><text x="22.94" y="709" font-size="23.5" fill="#00e4a0" textLength="50.41" lengthAdjust="spacingAndGlyphs">Vout</text></svg>
<div style="left:214px;top:704px;width:140px;height:28px;background:rgba(58,58,58,.96);border-radius:4px"></div>
<div style="left:214px;top:770px;width:140px;height:27.5px;background:rgba(58,58,58,.96);border-radius:4px"></div>
<svg width="1920" height="1079" style="left:0;top:0"><text x="217.21" y="725" font-size="17.5" fill="#e4e4e4" textLength="82.58" lengthAdjust="spacingAndGlyphs">v: 5.055 V</text><text x="217.21" y="790" font-size="17.5" fill="#e4e4e4" textLength="82.58" lengthAdjust="spacingAndGlyphs">v: 4.980 V</text></svg>
<div style="left:70px;top:735px;width:140px;height:30.3px;background:rgba(62,62,62,.88);border-radius:4px"></div>
<svg width="1920" height="1079" style="left:0;top:0"><text x="73.71" y="757" font-size="17.5" fill="#e4e4e4" textLength="118.58" lengthAdjust="spacingAndGlyphs">Δv: 74.719 mV</text></svg>
<div style="left:7px;top:721px;width:53px;height:24.6px;background:rgba(60,60,60,.92);border-radius:5px"></div>
<div style="left:9px;top:721.3px;width:18px;height:24px;background:#2b7fd0;border-radius:9px/10px"></div>
<div style="left:31px;top:721px;width:29px;height:24.6px;background:#10bf88;border-radius:4px"></div>
<svg width="1920" height="1079" style="left:0;top:0"><text x="18" y="740" font-size="16" fill="#fff" text-anchor="middle">A</text><text x="45.6" y="740" font-size="16" fill="#052a1e" text-anchor="middle" textLength="21.44" lengthAdjust="spacingAndGlyphs">C8</text></svg>
<div style="left:7px;top:756.7px;width:53px;height:24.6px;background:rgba(60,60,60,.92);border-radius:5px"></div>
<div style="left:9px;top:757.0px;width:18px;height:24px;background:#2b7fd0;border-radius:9px/10px"></div>
<div style="left:31px;top:756.7px;width:29px;height:24.6px;background:#10bf88;border-radius:4px"></div>
<svg width="1920" height="1079" style="left:0;top:0"><text x="18" y="776" font-size="16" fill="#fff" text-anchor="middle">B</text><text x="45.6" y="776" font-size="16" fill="#052a1e" text-anchor="middle" textLength="21.44" lengthAdjust="spacingAndGlyphs">C8</text></svg>
<div style="left:1769px;top:29px;width:152px;height:966px;border:1px solid #5a5856;border-right:none"></div>
<svg width="1920" height="1079" style="left:0;top:0"><text x="1785.27" y="26" font-size="29.5" fill="#fff" font-weight="700" textLength="117.25" lengthAdjust="spacingAndGlyphs" stroke="#fff" stroke-width="0.5">Tektronix</text></svg>
<svg width="30" height="26" style="left:1815px;top:2px" viewBox="1815 2 30 26"><path d="M1814.9 25.8L1824.9 9.6H1830.4L1820.6 25.8Z" fill="#1fb4e6"/></svg>
<svg width="1920" height="1079" style="left:0;top:0"><text x="1844" y="45.6" font-size="15" fill="#fff" font-weight="700" text-anchor="middle" textLength="83.85" lengthAdjust="spacingAndGlyphs">Add New...</text></svg>
<div style="left:1778px;top:56px;width:62.5px;height:37px;background:#29b6ea;border:1px solid #5c7f8e;border-radius:6px"></div>
<div style="left:1850.3px;top:56px;width:62.5px;height:37px;background:linear-gradient(#434343 0,#353535 22%,#2c2c2c 45%,#2a2a2a 100%);border:1px solid #6b615a;border-radius:6px;box-shadow:inset 0 -2px 2px rgba(0,0,0,.35)"></div>
<div style="left:1778px;top:102px;width:62.5px;height:37px;background:linear-gradient(#434343 0,#353535 22%,#2c2c2c 45%,#2a2a2a 100%);border:1px solid #6b615a;border-radius:6px;box-shadow:inset 0 -2px 2px rgba(0,0,0,.35)"></div>
<div style="left:1850.3px;top:102px;width:62.5px;height:37px;background:linear-gradient(#434343 0,#353535 22%,#2c2c2c 45%,#2a2a2a 100%);border:1px solid #6b615a;border-radius:6px;box-shadow:inset 0 -2px 2px rgba(0,0,0,.35)"></div>
<div style="left:1778px;top:148px;width:62.5px;height:37px;background:linear-gradient(#434343 0,#353535 22%,#2c2c2c 45%,#2a2a2a 100%);border:1px solid #6b615a;border-radius:6px;box-shadow:inset 0 -2px 2px rgba(0,0,0,.35)"></div>
<div style="left:1850.3px;top:148px;width:62.5px;height:37px;background:linear-gradient(#434343 0,#353535 22%,#2c2c2c 45%,#2a2a2a 100%);border:1px solid #6b615a;border-radius:6px;box-shadow:inset 0 -2px 2px rgba(0,0,0,.35)"></div>
<div style="left:1778px;top:198px;width:62.5px;height:37px;background:linear-gradient(#434343 0,#353535 22%,#2c2c2c 45%,#2a2a2a 100%);border:1px solid #6b615a;border-radius:6px;box-shadow:inset 0 -2px 2px rgba(0,0,0,.35)"></div>
<div style="left:1850.3px;top:198px;width:62.5px;height:37px;background:linear-gradient(#434343 0,#353535 22%,#2c2c2c 45%,#2a2a2a 100%);border:1px solid #6b615a;border-radius:6px;box-shadow:inset 0 -2px 2px rgba(0,0,0,.35)"></div>
<div style="left:1773px;top:191px;width:144px;height:1px;background:#5c5652"></div>
<div style="left:1773px;top:244px;width:144px;height:1px;background:#5c5652"></div>
<svg width="1920" height="1079" style="left:0;top:0"><text x="1809.3" y="80" font-size="15" fill="#000" text-anchor="middle" textLength="50.85" lengthAdjust="spacingAndGlyphs">Cursors</text><text x="1881.5" y="80" font-size="15" fill="#fff" text-anchor="middle" textLength="49.35" lengthAdjust="spacingAndGlyphs" stroke="#2e2e2e" stroke-width="0.22">Callout</text><text x="1809.3" y="126" font-size="15" fill="#fff" text-anchor="middle" textLength="58.75" lengthAdjust="spacingAndGlyphs" stroke="#2e2e2e" stroke-width="0.22">Measure</text><text x="1880.5" y="126" font-size="15" fill="#fff" text-anchor="middle" textLength="46.35" lengthAdjust="spacingAndGlyphs" stroke="#2e2e2e" stroke-width="0.22">Search</text><text x="1809.3" y="163" font-size="15" fill="#fff" text-anchor="middle" textLength="47.35" lengthAdjust="spacingAndGlyphs" stroke="#2e2e2e" stroke-width="0.22">Results</text><text x="1809.3" y="181" font-size="15" fill="#fff" text-anchor="middle" textLength="34.35" lengthAdjust="spacingAndGlyphs" stroke="#2e2e2e" stroke-width="0.22">Table</text><text x="1881.5" y="172" font-size="15" fill="#fff" text-anchor="middle" textLength="26.35" lengthAdjust="spacingAndGlyphs" stroke="#2e2e2e" stroke-width="0.22">Plot</text><text x="1881.2" y="222" font-size="15" fill="#fff" text-anchor="middle" textLength="48.65" lengthAdjust="spacingAndGlyphs" stroke="#2e2e2e" stroke-width="0.22">More...</text></svg>
<svg width="34" height="32" style="left:1794px;top:201px" viewBox="1794 201 34 32"><path d="M1797 204H1800.2V206.7H1797ZM1797 222.2H1800.2V224.9H1797ZM1803 204H1807.4V206.7H1803ZM1803 222.2H1807.4V224.9H1803ZM1810.4 204H1814.6V206.7H1810.4ZM1810.4 222.2H1814.6V224.9H1810.4ZM1817.6 204H1821V206.7H1817.6ZM1797 209.3H1799.9V212.8H1797ZM1818.1 209.3H1821V212.8H1818.1ZM1797 215.6H1799.9V219.1H1797ZM1818.1 215.6H1821V219.1H1818.1ZM1797 204H1799.9V206.9H1797Z M1797 221.9H1799.9V224.9H1797Z M1818.1 204H1821V207.2H1818.1Z" fill="#c0c0c0"/><circle cx="1811.1" cy="212.8" r="4.4" fill="none" stroke="#c9c9c9" stroke-width="1.6"/><path d="M1807.6 216.2L1802.8 219.6" stroke="#c9c9c9" stroke-width="2.7" stroke-linecap="round"/><path d="M1815.2 219L1823.4 224.1L1820.1 225.2L1822.5 228.3L1820.7 229.3L1818.5 226.2L1816.9 228.5Z" fill="#c4c4c4"/></svg>
<div style="left:1773px;top:260px;width:144px;height:59px;background:#c8c8c8;border-radius:5px;overflow:hidden"><div style="left:0;top:0;width:144px;height:19px;background:#58595b"></div><div style="left:0;top:19px;width:144px;height:1.5px;background:#aeaeae"></div></div>
<svg width="1920" height="1079" style="left:0;top:0"><text x="1778.34" y="275" font-size="14.7" fill="#fff" textLength="46.82" lengthAdjust="spacingAndGlyphs">Meas 1</text></svg>
<div style="left:1888.5px;top:262.8px;width:23px;height:13.6px;background:#2929d0;border:1px solid #2e2e2e;border-radius:7px"></div>
<svg width="1920" height="1079" style="left:0;top:0"><text x="1899.7" y="273.6" font-size="9" fill="#fff" font-weight="700" text-anchor="middle">6</text><text x="1778.34" y="294.1" font-size="14.7" fill="#000" textLength="64.82" lengthAdjust="spacingAndGlyphs">Maximum</text><text x="1778.34" y="313" font-size="14.7" fill="#000" textLength="82.32" lengthAdjust="spacingAndGlyphs">µ': 9.484 mA</text></svg>
<div style="left:1773px;top:327px;width:144px;height:59px;background:#c8c8c8;border-radius:5px;overflow:hidden"><div style="left:0;top:0;width:144px;height:19px;background:#58595b"></div><div style="left:0;top:19px;width:144px;height:1.5px;background:#aeaeae"></div></div>
<svg width="1920" height="1079" style="left:0;top:0"><text x="1778.34" y="342" font-size="14.7" fill="#fff" textLength="47.62" lengthAdjust="spacingAndGlyphs">Meas 2</text></svg>
<div style="left:1888.5px;top:329.8px;width:23px;height:13.6px;background:#2929d0;border:1px solid #2e2e2e;border-radius:7px"></div>
<svg width="1920" height="1079" style="left:0;top:0"><text x="1899.7" y="340.6" font-size="9" fill="#fff" font-weight="700" text-anchor="middle">6</text><text x="1778.34" y="361.1" font-size="14.7" fill="#000" textLength="85.82" lengthAdjust="spacingAndGlyphs">Peak-to-Peak</text><text x="1778.34" y="380" font-size="14.7" fill="#000" textLength="81.32" lengthAdjust="spacingAndGlyphs">µ': 15.65 mA</text></svg>
<div style="left:1773px;top:394px;width:144px;height:59px;background:#c8c8c8;border-radius:5px;overflow:hidden"><div style="left:0;top:0;width:144px;height:19px;background:#58595b"></div><div style="left:0;top:19px;width:144px;height:1.5px;background:#aeaeae"></div></div>
<svg width="1920" height="1079" style="left:0;top:0"><text x="1778.34" y="409" font-size="14.7" fill="#fff" textLength="47.62" lengthAdjust="spacingAndGlyphs">Meas 3</text></svg>
<div style="left:1888.5px;top:396.8px;width:23px;height:13.6px;background:#2929d0;border:1px solid #2e2e2e;border-radius:7px"></div>
<svg width="1920" height="1079" style="left:0;top:0"><text x="1899.7" y="407.6" font-size="9" fill="#fff" font-weight="700" text-anchor="middle">6</text><text x="1778.34" y="428.1" font-size="14.7" fill="#000" textLength="36.52" lengthAdjust="spacingAndGlyphs">Mean</text><text x="1778.34" y="447" font-size="14.7" fill="#000" textLength="77.32" lengthAdjust="spacingAndGlyphs">µ': 206.4 µA</text></svg>
<div style="left:1773px;top:461px;width:144px;height:59px;background:#c8c8c8;border-radius:5px;overflow:hidden"><div style="left:0;top:0;width:144px;height:19px;background:#58595b"></div><div style="left:0;top:19px;width:144px;height:1.5px;background:#aeaeae"></div></div>
<svg width="1920" height="1079" style="left:0;top:0"><text x="1778.34" y="476" font-size="14.7" fill="#fff" textLength="47.62" lengthAdjust="spacingAndGlyphs">Meas 5</text></svg>
<div style="left:1888.5px;top:463.8px;width:23px;height:13.6px;background:#fbf42c;border:1px solid #2e2e2e;border-radius:7px"></div>
<svg width="1920" height="1079" style="left:0;top:0"><text x="1899.7" y="474.6" font-size="10.5" fill="#000" text-anchor="middle">1</text><text x="1778.34" y="495.1" font-size="14.7" fill="#000" textLength="36.52" lengthAdjust="spacingAndGlyphs">Mean</text><text x="1778.34" y="514" font-size="14.7" fill="#000" textLength="85.82" lengthAdjust="spacingAndGlyphs">µ': -63.10 mV</text></svg>
<div style="left:1773px;top:528px;width:144px;height:78px;background:#c8c8c8;border-radius:5px;overflow:hidden"><div style="left:0;top:0;width:144px;height:19px;background:#58595b"></div><div style="left:0;top:19px;width:144px;height:1.5px;background:#aeaeae"></div></div>
<svg width="1920" height="1079" style="left:0;top:0"><text x="1778.34" y="543" font-size="14.7" fill="#fff" textLength="48.12" lengthAdjust="spacingAndGlyphs">Meas 6</text></svg>
<div style="left:1888.5px;top:530.8px;width:23px;height:13.6px;background:#fbf42c;border:1px solid #2e2e2e;border-radius:7px"></div>
<svg width="1920" height="1079" style="left:0;top:0"><text x="1899.7" y="541.6" font-size="10.5" fill="#000" text-anchor="middle">1</text><text x="1778.34" y="562.1" font-size="14.7" fill="#000" textLength="65.62" lengthAdjust="spacingAndGlyphs">Frequency</text><text x="1778.34" y="581" font-size="14.7" fill="#000" textLength="28.82" lengthAdjust="spacingAndGlyphs">µ': --</text><text x="1778.34" y="601.4" font-size="14.7" fill="#000" font-weight="700" textLength="103.82" lengthAdjust="spacingAndGlyphs">Low amplitude</text></svg>
<div style="left:1773px;top:614px;width:144px;height:78px;background:#c8c8c8;border-radius:5px;overflow:hidden"><div style="left:0;top:0;width:144px;height:19px;background:#58595b"></div><div style="left:0;top:19px;width:144px;height:1.5px;background:#aeaeae"></div></div>
<svg width="1920" height="1079" style="left:0;top:0"><text x="1778.34" y="629" font-size="14.7" fill="#fff" textLength="47.62" lengthAdjust="spacingAndGlyphs">Meas 7</text></svg>
<div style="left:1888.5px;top:616.8px;width:23px;height:13.6px;background:#fbf42c;border:1px solid #2e2e2e;border-radius:7px"></div>
<svg width="1920" height="1079" style="left:0;top:0"><text x="1899.7" y="627.6" font-size="10.5" fill="#000" text-anchor="middle">1</text><text x="1778.34" y="648.1" font-size="14.7" fill="#000" textLength="39.82" lengthAdjust="spacingAndGlyphs">Period</text><text x="1778.34" y="667" font-size="14.7" fill="#000" textLength="28.82" lengthAdjust="spacingAndGlyphs">µ': --</text><text x="1778.34" y="687.4" font-size="14.7" fill="#000" font-weight="700" textLength="103.82" lengthAdjust="spacingAndGlyphs">Low amplitude</text></svg>
<div style="left:1773px;top:700px;width:144px;height:78px;background:#c8c8c8;border-radius:5px;overflow:hidden"><div style="left:0;top:0;width:144px;height:19px;background:#000"></div><div style="left:0;top:19px;width:144px;height:1.5px;background:#aeaeae"></div></div>
<svg width="1920" height="1079" style="left:0;top:0"><text x="1778.34" y="715" font-size="14.7" fill="#fff" textLength="48.62" lengthAdjust="spacingAndGlyphs">Meas 8</text></svg>
<div style="left:1888.5px;top:702.8px;width:23px;height:13.6px;background:#2929d0;border:1px solid #2e2e2e;border-radius:7px"></div>
<svg width="1920" height="1079" style="left:0;top:0"><text x="1899.7" y="713.6" font-size="9" fill="#fff" font-weight="700" text-anchor="middle">6</text><text x="1778.34" y="734.1" font-size="14.7" fill="#000" textLength="39.82" lengthAdjust="spacingAndGlyphs">Period</text><text x="1778.34" y="753" font-size="14.7" fill="#000" textLength="28.82" lengthAdjust="spacingAndGlyphs">µ': --</text><text x="1778.34" y="773.4" font-size="14.7" fill="#000" font-weight="700" textLength="103.82" lengthAdjust="spacingAndGlyphs">Low amplitude</text></svg>
<div style="left:1759.8px;top:501.1px;width:4.4px;height:4.4px;background:#c2c2c2;border-radius:50%"></div>
<div style="left:1759.8px;top:509.6px;width:4.4px;height:4.4px;background:#c2c2c2;border-radius:50%"></div>
<div style="left:1759.8px;top:518.1999999999999px;width:4.4px;height:4.4px;background:#c2c2c2;border-radius:50%"></div>
<div style="left:3px;top:998px;width:90px;height:77.5px;background:#7f7f7f;border-radius:5px;overflow:hidden"><div style="left:0;top:0;width:90px;height:19px;background:#a39a38"></div></div>
<svg width="1920" height="1079" style="left:0;top:0"><text x="7.98" y="1013.4" font-size="16" fill="#1a1a1a" textLength="29.44" lengthAdjust="spacingAndGlyphs">Ch 1</text><text x="8.34" y="1032" font-size="14.7" fill="#1e1e1e" textLength="42.82" lengthAdjust="spacingAndGlyphs">5 V/div</text><text x="8.34" y="1070" font-size="14.7" fill="#1e1e1e" textLength="57.82" lengthAdjust="spacingAndGlyphs">250 MHz</text><text x="74.77" y="1064" font-size="9.5" fill="#1e1e1e" font-weight="700" textLength="6.05" lengthAdjust="spacingAndGlyphs">B</text><text x="79.89" y="1067" font-size="7" fill="#1e1e1e" font-weight="700" textLength="6.43" lengthAdjust="spacingAndGlyphs">W</text></svg>
<div style="left:98px;top:998px;width:90px;height:77.5px;background:#c8c8c8;border-radius:5px;overflow:hidden"><div style="left:0;top:0;width:90px;height:19px;background:#1f1f47"></div></div>
<svg width="1920" height="1079" style="left:0;top:0"><text x="102.98" y="1013.4" font-size="16" fill="#fff" textLength="29.44" lengthAdjust="spacingAndGlyphs">Ch 6</text><text x="103.34" y="1032" font-size="14.7" fill="#000" textLength="64.32" lengthAdjust="spacingAndGlyphs">50 mA/div</text><text x="103.34" y="1051" font-size="14.7" fill="#000" textLength="35.82" lengthAdjust="spacingAndGlyphs">1 MΩ</text><text x="103.34" y="1070" font-size="14.7" fill="#000" textLength="57.82" lengthAdjust="spacingAndGlyphs">120 MHz</text><text x="169.77" y="1064" font-size="9.5" fill="#000" font-weight="700" textLength="6.05" lengthAdjust="spacingAndGlyphs">B</text><text x="174.88" y="1067" font-size="7" fill="#000" font-weight="700" textLength="6.43" lengthAdjust="spacingAndGlyphs">W</text></svg>
<div style="left:193px;top:998px;width:90px;height:77.5px;background:#c8c8c8;border-radius:5px;overflow:hidden"><div style="left:0;top:0;width:90px;height:19px;background:#00e09d"></div></div>
<svg width="1920" height="1079" style="left:0;top:0"><text x="197.98" y="1013.4" font-size="16" fill="#003322" textLength="29.44" lengthAdjust="spacingAndGlyphs">Ch 8</text><text x="198.34" y="1032" font-size="14.7" fill="#000" textLength="71.32" lengthAdjust="spacingAndGlyphs">100 mV/div</text><text x="198.34" y="1051" font-size="14.7" fill="#000" textLength="35.82" lengthAdjust="spacingAndGlyphs">1 MΩ</text><text x="198.34" y="1070" font-size="14.7" fill="#000" textLength="57.82" lengthAdjust="spacingAndGlyphs">500 MHz</text><text x="264.77" y="1064" font-size="9.5" fill="#000" font-weight="700" textLength="6.05" lengthAdjust="spacingAndGlyphs">B</text><text x="269.88" y="1067" font-size="7" fill="#000" font-weight="700" textLength="6.43" lengthAdjust="spacingAndGlyphs">W</text></svg>
<svg width="30" height="24" style="left:4px;top:1032px" viewBox="4 1032 30 24"><path d="M10.5 1043.8C10.8 1039.6 13.4 1038.3 16.1 1038.4C19.6 1038.5 21.6 1040.4 21.9 1044.2" fill="none" stroke="#1c1c1c" stroke-width="1.2"/><circle cx="16.1" cy="1041.9" r="2.6" fill="none" stroke="#1c1c1c" stroke-width="1.2"/><ellipse cx="10.7" cy="1046.3" rx="1.5" ry="2.7" fill="#8e8e8e" stroke="#3a3a3a" stroke-width="0.9"/><rect x="19.9" y="1044.3" width="3.7" height="5.2" rx="0.6" fill="#9c9c9c" stroke="#404040" stroke-width="0.9"/></svg>
<div style="left:888px;top:998px;width:40px;height:78px;background:linear-gradient(#434343 0,#363636 10%,#2c2c2c 28%,#2a2a2a 100%);border:1px solid #6b615a;border-radius:6px;box-shadow:inset 0 -3px 3px rgba(0,0,0,.3)"></div>
<div style="left:892px;top:1005.7px;width:32px;height:2.2px;background:#19d8e0;border-radius:1px"></div>
<svg width="1920" height="1079" style="left:0;top:0"><text x="907.3" y="1049" font-size="20" fill="#fff" text-anchor="middle" textLength="10.3" lengthAdjust="spacingAndGlyphs" stroke="#2c2c2c" stroke-width="0.5">2</text></svg>
<div style="left:933px;top:998px;width:40px;height:78px;background:linear-gradient(#434343 0,#363636 10%,#2c2c2c 28%,#2a2a2a 100%);border:1px solid #6b615a;border-radius:6px;box-shadow:inset 0 -3px 3px rgba(0,0,0,.3)"></div>
<div style="left:937px;top:1005.7px;width:32px;height:2.2px;background:#f0384e;border-radius:1px"></div>
<svg width="1920" height="1079" style="left:0;top:0"><text x="952.3" y="1049" font-size="20" fill="#fff" text-anchor="middle" textLength="10.3" lengthAdjust="spacingAndGlyphs" stroke="#2c2c2c" stroke-width="0.5">3</text></svg>
<div style="left:978px;top:998px;width:40px;height:78px;background:linear-gradient(#434343 0,#363636 10%,#2c2c2c 28%,#2a2a2a 100%);border:1px solid #6b615a;border-radius:6px;box-shadow:inset 0 -3px 3px rgba(0,0,0,.3)"></div>
<div style="left:982px;top:1005.7px;width:32px;height:2.2px;background:#86e01e;border-radius:1px"></div>
<svg width="1920" height="1079" style="left:0;top:0"><text x="997.3" y="1049" font-size="20" fill="#fff" text-anchor="middle" textLength="10.3" lengthAdjust="spacingAndGlyphs" stroke="#2c2c2c" stroke-width="0.5">4</text></svg>
<div style="left:1023px;top:998px;width:40px;height:78px;background:linear-gradient(#434343 0,#363636 10%,#2c2c2c 28%,#2a2a2a 100%);border:1px solid #6b615a;border-radius:6px;box-shadow:inset 0 -3px 3px rgba(0,0,0,.3)"></div>
<div style="left:1027px;top:1005.7px;width:32px;height:2.2px;background:#ff9420;border-radius:1px"></div>
<svg width="1920" height="1079" style="left:0;top:0"><text x="1042.3" y="1049" font-size="20" fill="#fff" text-anchor="middle" textLength="10.3" lengthAdjust="spacingAndGlyphs" stroke="#2c2c2c" stroke-width="0.5">5</text></svg>
<div style="left:1068px;top:998px;width:40px;height:78px;background:linear-gradient(#434343 0,#363636 10%,#2c2c2c 28%,#2a2a2a 100%);border:1px solid #6b615a;border-radius:6px;box-shadow:inset 0 -3px 3px rgba(0,0,0,.3)"></div>
<div style="left:1072px;top:1005.7px;width:32px;height:2.2px;background:#f048b0;border-radius:1px"></div>
<svg width="1920" height="1079" style="left:0;top:0"><text x="1087.3" y="1049" font-size="20" fill="#fff" text-anchor="middle" textLength="10.3" lengthAdjust="spacingAndGlyphs" stroke="#2c2c2c" stroke-width="0.5">7</text></svg>
<div style="left:1118px;top:999px;width:1px;height:76px;background:#5c5652"></div>
<div style="left:1129px;top:998px;width:40px;height:78px;background:linear-gradient(#434343 0,#363636 10%,#2c2c2c 28%,#2a2a2a 100%);border:1px solid #6b615a;border-radius:6px;box-shadow:inset 0 -3px 3px rgba(0,0,0,.3)"></div>
<div style="left:1133px;top:1005.7px;width:32px;height:2.2px;background:#ff9420;border-radius:1px"></div>
<svg width="1920" height="1079" style="left:0;top:0"><text x="1148.8" y="1030" font-size="15" fill="#fff" text-anchor="middle" textLength="26.85" lengthAdjust="spacingAndGlyphs" stroke="#2c2c2c" stroke-width="0.25">Add</text><text x="1148.8" y="1047" font-size="15" fill="#fff" text-anchor="middle" textLength="29.95" lengthAdjust="spacingAndGlyphs" stroke="#2c2c2c" stroke-width="0.25">New</text><text x="1148.8" y="1064" font-size="15" fill="#fff" text-anchor="middle" textLength="34.35" lengthAdjust="spacingAndGlyphs" stroke="#2c2c2c" stroke-width="0.25">Math</text></svg>
<div style="left:1174px;top:998px;width:40px;height:78px;background:linear-gradient(#434343 0,#363636 10%,#2c2c2c 28%,#2a2a2a 100%);border:1px solid #6b615a;border-radius:6px;box-shadow:inset 0 -3px 3px rgba(0,0,0,.3)"></div>
<div style="left:1178px;top:1005.7px;width:32px;height:2.2px;background:#c4c8d0;border-radius:1px"></div>
<svg width="1920" height="1079" style="left:0;top:0"><text x="1193.8" y="1030" font-size="15" fill="#fff" text-anchor="middle" textLength="26.85" lengthAdjust="spacingAndGlyphs" stroke="#2c2c2c" stroke-width="0.25">Add</text><text x="1193.8" y="1047" font-size="15" fill="#fff" text-anchor="middle" textLength="29.95" lengthAdjust="spacingAndGlyphs" stroke="#2c2c2c" stroke-width="0.25">New</text><text x="1193.8" y="1064" font-size="15" fill="#fff" text-anchor="middle" textLength="22.15" lengthAdjust="spacingAndGlyphs" stroke="#2c2c2c" stroke-width="0.25">Ref</text></svg>
<div style="left:1219px;top:998px;width:40px;height:78px;background:linear-gradient(#434343 0,#363636 10%,#2c2c2c 28%,#2a2a2a 100%);border:1px solid #6b615a;border-radius:6px;box-shadow:inset 0 -3px 3px rgba(0,0,0,.3)"></div>
<div style="left:1223px;top:1005.7px;width:32px;height:2.2px;background:#b050f0;border-radius:1px"></div>
<svg width="1920" height="1079" style="left:0;top:0"><text x="1238.8" y="1030" font-size="15" fill="#fff" text-anchor="middle" textLength="26.85" lengthAdjust="spacingAndGlyphs" stroke="#2c2c2c" stroke-width="0.25">Add</text><text x="1238.8" y="1047" font-size="15" fill="#fff" text-anchor="middle" textLength="29.95" lengthAdjust="spacingAndGlyphs" stroke="#2c2c2c" stroke-width="0.25">New</text><text x="1238.8" y="1064" font-size="15" fill="#fff" text-anchor="middle" textLength="22.75" lengthAdjust="spacingAndGlyphs" stroke="#2c2c2c" stroke-width="0.25">Bus</text></svg>
<div style="left:1269px;top:999px;width:1px;height:76px;background:#5c5652"></div>
<div style="left:1280px;top:998px;width:200px;height:77.5px;background:#c8c8c8;border:1px solid #1e1e1e;border-radius:4px;overflow:hidden"><div style="left:0;top:0;width:200px;height:19px;background:#58595b"></div><div style="left:0;top:19px;width:200px;height:1.5px;background:#aeaeae"></div></div>
<svg width="1920" height="1079" style="left:0;top:0"><text x="1285.23" y="1013.5" font-size="15" fill="#fff" textLength="74.35" lengthAdjust="spacingAndGlyphs">Horizontal</text></svg>
<div style="left:1485px;top:998px;width:159.5px;height:77.5px;background:#c8c8c8;border:1px solid #1e1e1e;border-radius:4px;overflow:hidden"><div style="left:0;top:0;width:159.5px;height:19px;background:#58595b"></div><div style="left:0;top:19px;width:159.5px;height:1.5px;background:#aeaeae"></div></div>
<svg width="1920" height="1079" style="left:0;top:0"><text x="1490.23" y="1013.5" font-size="15" fill="#fff" textLength="48.75" lengthAdjust="spacingAndGlyphs">Trigger</text></svg>
<div style="left:1649.7px;top:998px;width:150.4px;height:77.5px;background:#c8c8c8;border:1px solid #1e1e1e;border-radius:4px;overflow:hidden"><div style="left:0;top:0;width:150.4px;height:19px;background:#58595b"></div><div style="left:0;top:19px;width:150.4px;height:1.5px;background:#aeaeae"></div></div>
<svg width="1920" height="1079" style="left:0;top:0"><text x="1655.53" y="1013.5" font-size="15" fill="#fff" textLength="78.55" lengthAdjust="spacingAndGlyphs">Acquisition</text><text x="1284.95" y="1032" font-size="14.5" fill="#000" textLength="51.3" lengthAdjust="spacingAndGlyphs">1 ms/div</text><text x="1391.25" y="1032" font-size="14.5" fill="#000" textLength="37.51" lengthAdjust="spacingAndGlyphs">10 ms</text><text x="1284.95" y="1051" font-size="14.5" fill="#000" textLength="67.31" lengthAdjust="spacingAndGlyphs">SR: 5 MS/s</text><text x="1391.25" y="1051" font-size="14.5" fill="#000" textLength="58.8" lengthAdjust="spacingAndGlyphs">200 ns/pt</text><text x="1284.95" y="1070" font-size="14.5" fill="#000" textLength="70.01" lengthAdjust="spacingAndGlyphs">RL: 50 kpts</text><text x="1405.35" y="1070" font-size="14.5" fill="#000" textLength="29.3" lengthAdjust="spacingAndGlyphs">50%</text></svg>
<svg width="12" height="15" style="left:1390px;top:1057px" viewBox="0 0 12 15"><path d="M1.7 1.5H9.1V9.7H7L5.4 12.8L3.8 9.7H1.7Z" fill="#000" stroke="#f7931e" stroke-width="1.3"/></svg>
<svg width="1920" height="1079" style="left:0;top:0"><text x="1395.4" y="1065.4" font-size="7.5" fill="#fff" font-weight="700" text-anchor="middle">T</text></svg>
<div style="left:1490px;top:1019.8px;width:30px;height:16px;background:#fbf42c;border:1px solid #2e2e2e;border-radius:6px"></div>
<svg width="1920" height="1079" style="left:0;top:0"><text x="1505" y="1032" font-size="14.5" fill="#1a1a1a" text-anchor="middle">1</text></svg>
<svg width="20" height="14" style="left:1528px;top:1020px" viewBox="0 0 20 14"><path d="M2 12H6.2L12.4 2.3H17.8" fill="none" stroke="#2c2c8c" stroke-width="1.05"/></svg>
<svg width="1920" height="1079" style="left:0;top:0"><text x="1556.05" y="1032" font-size="14.5" fill="#000" textLength="41.3" lengthAdjust="spacingAndGlyphs">23.4 V</text><text x="1654.55" y="1032" font-size="14.5" fill="#000" textLength="35.8" lengthAdjust="spacingAndGlyphs">Auto,</text><text x="1735.85" y="1032" font-size="14.5" fill="#000" textLength="51.1" lengthAdjust="spacingAndGlyphs">Analyze</text><text x="1654.55" y="1051" font-size="14.5" fill="#000" textLength="96.81" lengthAdjust="spacingAndGlyphs">Sample: 12 bits</text><text x="1654.55" y="1070" font-size="14.5" fill="#000" textLength="59.51" lengthAdjust="spacingAndGlyphs">219 Acqs</text></svg>
<div style="left:1811px;top:999px;width:1px;height:76px;background:#5c5652"></div>
<div style="left:1822px;top:998px;width:90px;height:36px;background:#ff1e28;border:1px solid #5d6262;border-radius:6px"></div>
<svg width="1920" height="1079" style="left:0;top:0"><text x="1867.7" y="1021" font-size="13.5" fill="#fff" font-weight="700" text-anchor="middle" textLength="52.61" lengthAdjust="spacingAndGlyphs">Stopped</text></svg>
<div style="left:1822px;top:1039.3px;width:90px;height:36.4px;background:#c8c8c8;border-radius:5px"></div>
<svg width="1920" height="1079" style="left:0;top:0"><text x="1867" y="1054" font-size="14.7" fill="#000" text-anchor="middle" textLength="79.32" lengthAdjust="spacingAndGlyphs">03 Apr 2025</text><text x="1867" y="1071" font-size="14.7" fill="#000" text-anchor="middle" textLength="74.82" lengthAdjust="spacingAndGlyphs">1:37:24 AM</text></svg>
</body></html>
